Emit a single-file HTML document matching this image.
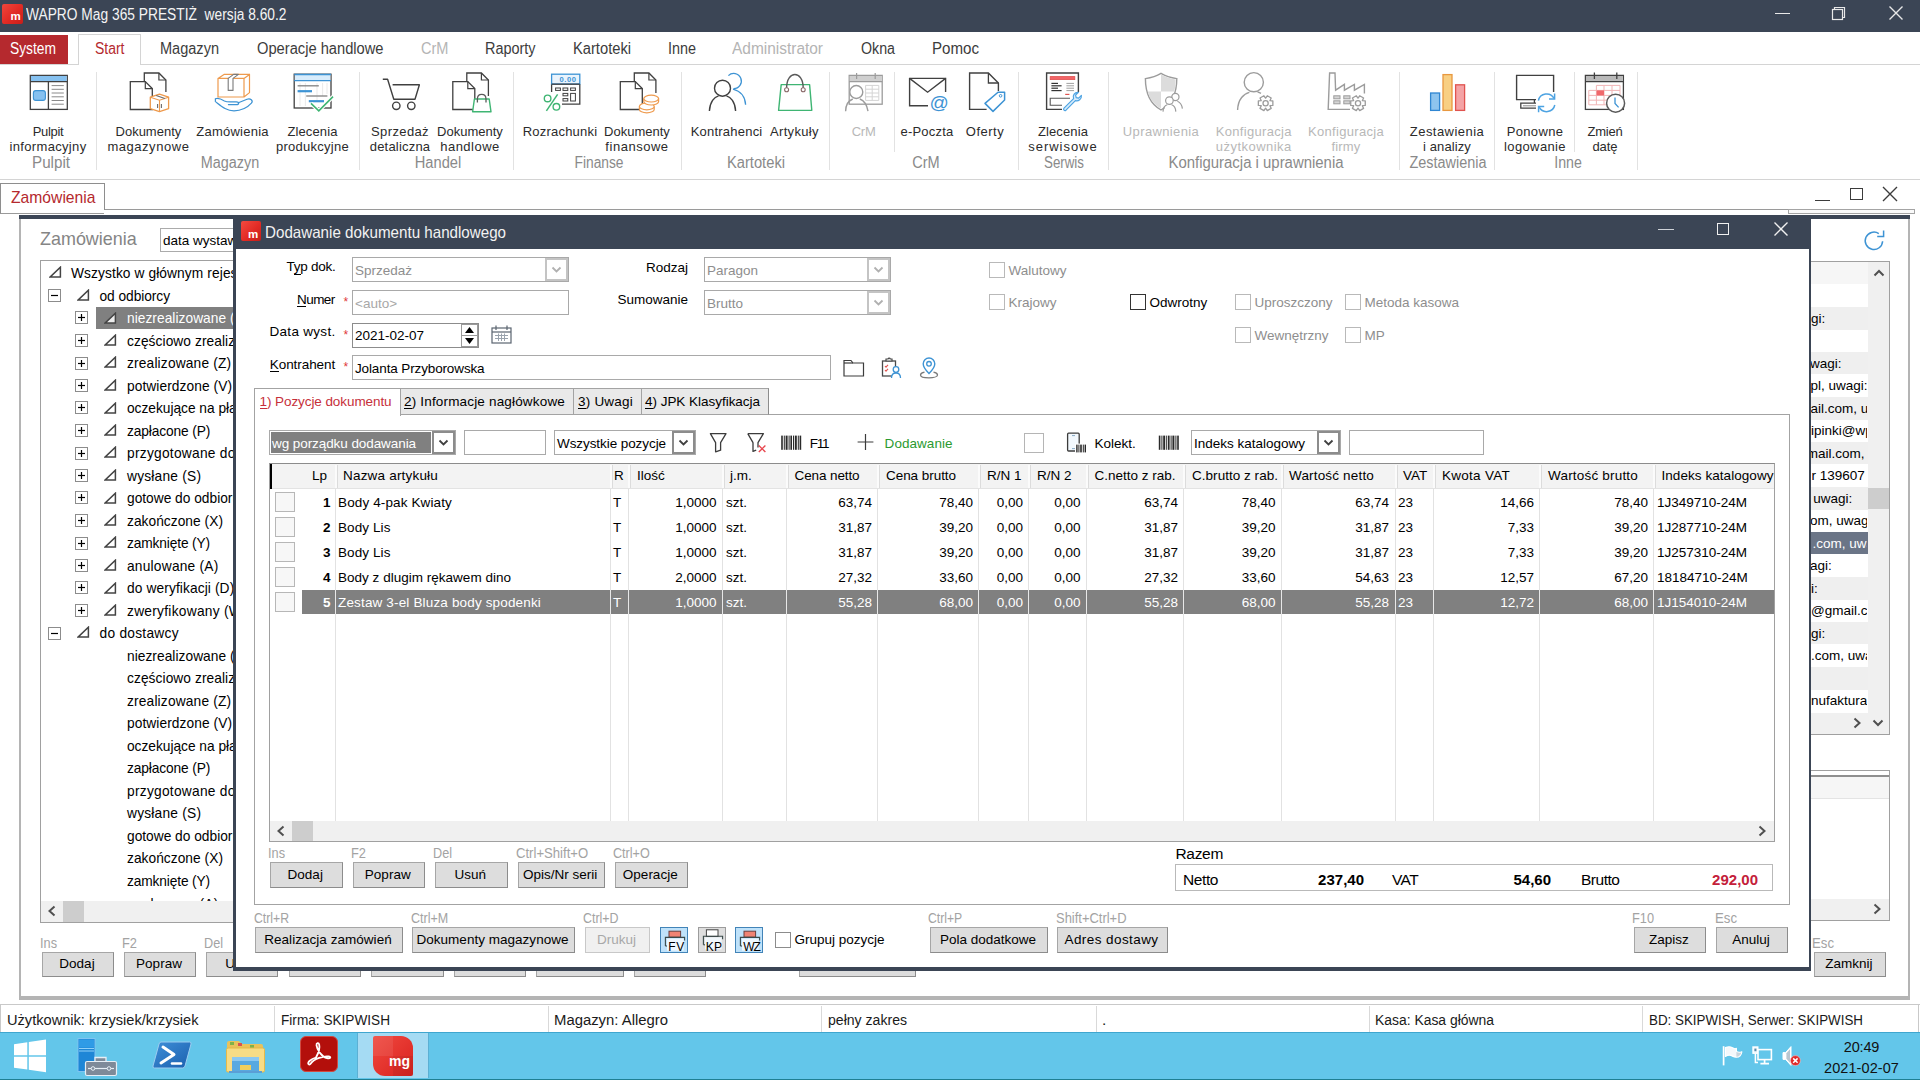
<!DOCTYPE html>
<html><head><meta charset="utf-8"><title>WAPRO Mag</title><style>html,body{margin:0;padding:0;}body{width:1920px;height:1080px;overflow:hidden;background:#fff;position:relative;font-family:"Liberation Sans",sans-serif;}
.a{position:absolute;box-sizing:border-box;}
.t{white-space:pre;line-height:20px;height:20px;}
.btn{background:#dddddd;border:1px solid #a6a6a6;border-bottom-color:#8c8c8c;border-right-color:#8c8c8c;}
</style></head><body>
<div class="a" style="left:0px;top:0px;width:1920px;height:32px;background:#3b4555;"></div>
<div class="a" style="left:2px;top:4px;width:21px;height:20px;border-radius:2px;background:linear-gradient(135deg,#f0463c 0%,#e02a24 55%,#c81e1a 100%);"></div>
<div class="a t" style="top:6px;font-size:11.5px;color:#fff;font-weight:bold;left:10.5px;">m</div>
<div class="a t" style="top:5px;font-size:16px;color:#f4f4f4;transform:scaleX(0.8608);transform-origin:0 50%;left:25.6px;">WAPRO Mag 365 PRESTIŻ  wersja 8.60.2</div>
<div class="a" style="left:1775px;top:13px;width:15px;height:1px;background:#e8e8e8;"></div>
<svg class="a" style="left:1831px;top:6px;" width="15" height="15" viewBox="0 0 15 15" fill="none"><path d="M3.5 3.5V1.5H13.5V11.5H11.5" stroke="#e8e8e8" stroke-width="1.2"/><rect x="1.5" y="3.5" width="10" height="10" stroke="#e8e8e8" stroke-width="1.2"/></svg>
<svg class="a" style="left:1888px;top:5px;" width="16" height="16" viewBox="0 0 16 16" fill="none"><path d="M1.5 1.5L14.5 14.5M14.5 1.5L1.5 14.5" stroke="#e8e8e8" stroke-width="1.4"/></svg>
<div class="a" style="left:0px;top:64px;width:78px;height:1px;background:#d4d4d4;"></div>
<div class="a" style="left:141px;top:64px;width:1779px;height:1px;background:#d4d4d4;"></div>
<div class="a" style="left:0px;top:35px;width:68px;height:29px;background:#b5292e;"></div>
<div class="a t" style="top:39px;font-size:16px;color:#fff;transform:scaleX(0.8624);transform-origin:0 50%;left:9.5px;">System</div>
<div class="a" style="left:78px;top:34px;width:63px;height:31px;background:#fff;border:1px solid #d4d4d4;border-bottom:none;"></div>
<div class="a t" style="top:39px;font-size:16px;color:#b5292e;transform:scaleX(0.8731);transform-origin:0 50%;left:94.5px;">Start</div>
<div class="a t" style="top:39px;font-size:16px;color:#3c3c3c;transform:scaleX(0.9088);transform-origin:0 50%;left:160px;">Magazyn</div>
<div class="a t" style="top:39px;font-size:16px;color:#3c3c3c;transform:scaleX(0.9176);transform-origin:0 50%;left:256.5px;">Operacje handlowe</div>
<div class="a t" style="top:39px;font-size:16px;color:#b4b4b4;transform:scaleX(0.9103);transform-origin:0 50%;left:420.5px;">CrM</div>
<div class="a t" style="top:39px;font-size:16px;color:#3c3c3c;transform:scaleX(0.9032);transform-origin:0 50%;left:485.4px;">Raporty</div>
<div class="a t" style="top:39px;font-size:16px;color:#3c3c3c;transform:scaleX(0.9186);transform-origin:0 50%;left:573px;">Kartoteki</div>
<div class="a t" style="top:39px;font-size:16px;color:#3c3c3c;transform:scaleX(0.8992);transform-origin:0 50%;left:667.7px;">Inne</div>
<div class="a t" style="top:39px;font-size:16px;color:#b4b4b4;transform:scaleX(0.9656);transform-origin:0 50%;left:732.4px;">Administrator</div>
<div class="a t" style="top:39px;font-size:16px;color:#3c3c3c;transform:scaleX(0.8891);transform-origin:0 50%;left:860.5px;">Okna</div>
<div class="a t" style="top:39px;font-size:16px;color:#3c3c3c;transform:scaleX(0.9439);transform-origin:0 50%;left:931.5px;">Pomoc</div>
<div class="a" style="left:0px;top:179px;width:1920px;height:1px;background:#d4d4d4;"></div>
<div class="a" style="left:96px;top:72px;width:1px;height:98px;background:#e2e2e2;"></div>
<div class="a" style="left:359px;top:72px;width:1px;height:98px;background:#e2e2e2;"></div>
<div class="a" style="left:513px;top:72px;width:1px;height:98px;background:#e2e2e2;"></div>
<div class="a" style="left:681px;top:72px;width:1px;height:98px;background:#e2e2e2;"></div>
<div class="a" style="left:829px;top:72px;width:1px;height:98px;background:#e2e2e2;"></div>
<div class="a" style="left:1018px;top:72px;width:1px;height:98px;background:#e2e2e2;"></div>
<div class="a" style="left:1108px;top:72px;width:1px;height:98px;background:#e2e2e2;"></div>
<div class="a" style="left:1399px;top:72px;width:1px;height:98px;background:#e2e2e2;"></div>
<div class="a" style="left:1494px;top:72px;width:1px;height:98px;background:#e2e2e2;"></div>
<div class="a" style="left:1637px;top:72px;width:1px;height:98px;background:#e2e2e2;"></div>
<div class="a" style="left:894px;top:72px;width:1px;height:80px;background:#e2e2e2;"></div>
<div class="a" style="left:1574px;top:72px;width:1px;height:80px;background:#e2e2e2;"></div>
<div class="a t" style="top:122px;font-size:13px;color:#2b2b2b;letter-spacing:-0.336px;left:-152px;width:400px;text-align:center;">Pulpit</div>
<div class="a t" style="top:137px;font-size:13px;color:#2b2b2b;letter-spacing:0.336px;left:-152px;width:400px;text-align:center;">informacyjny</div>
<div class="a t" style="top:122px;font-size:13px;color:#2b2b2b;letter-spacing:0.001px;left:-51.599999999999994px;width:400px;text-align:center;">Dokumenty</div>
<div class="a t" style="top:137px;font-size:13px;color:#2b2b2b;letter-spacing:0.541px;left:-51.599999999999994px;width:400px;text-align:center;">magazynowe</div>
<div class="a t" style="top:122px;font-size:13px;color:#2b2b2b;letter-spacing:0.242px;left:32.5px;width:400px;text-align:center;">Zamówienia</div>
<div class="a t" style="top:122px;font-size:13px;color:#2b2b2b;letter-spacing:0.133px;left:112.5px;width:400px;text-align:center;">Zlecenia</div>
<div class="a t" style="top:137px;font-size:13px;color:#2b2b2b;letter-spacing:0.264px;left:112.5px;width:400px;text-align:center;">produkcyjne</div>
<div class="a t" style="top:122px;font-size:13px;color:#2b2b2b;letter-spacing:0.385px;left:200px;width:400px;text-align:center;">Sprzedaż</div>
<div class="a t" style="top:137px;font-size:13px;color:#2b2b2b;letter-spacing:0.197px;left:200px;width:400px;text-align:center;">detaliczna</div>
<div class="a t" style="top:122px;font-size:13px;color:#2b2b2b;letter-spacing:0.001px;left:270px;width:400px;text-align:center;">Dokumenty</div>
<div class="a t" style="top:137px;font-size:13px;color:#2b2b2b;letter-spacing:0.481px;left:270px;width:400px;text-align:center;">handlowe</div>
<div class="a t" style="top:122px;font-size:13px;color:#2b2b2b;letter-spacing:0.204px;left:360px;width:400px;text-align:center;">Rozrachunki</div>
<div class="a t" style="top:122px;font-size:13px;color:#2b2b2b;letter-spacing:0.001px;left:437px;width:400px;text-align:center;">Dokumenty</div>
<div class="a t" style="top:137px;font-size:13px;color:#2b2b2b;letter-spacing:0.524px;left:437px;width:400px;text-align:center;">finansowe</div>
<div class="a t" style="top:122px;font-size:13px;color:#2b2b2b;letter-spacing:0.216px;left:526.6px;width:400px;text-align:center;">Kontrahenci</div>
<div class="a t" style="top:122px;font-size:13px;color:#2b2b2b;letter-spacing:0.315px;left:594.4px;width:400px;text-align:center;">Artykuły</div>
<div class="a t" style="top:122px;font-size:13px;color:#b8b8b8;letter-spacing:-0.265px;left:663.6px;width:400px;text-align:center;">CrM</div>
<div class="a t" style="top:122px;font-size:13px;color:#2b2b2b;letter-spacing:0.213px;left:727px;width:400px;text-align:center;">e-Poczta</div>
<div class="a t" style="top:122px;font-size:13px;color:#2b2b2b;letter-spacing:0.476px;left:785px;width:400px;text-align:center;">Oferty</div>
<div class="a t" style="top:122px;font-size:13px;color:#2b2b2b;letter-spacing:0.133px;left:863px;width:400px;text-align:center;">Zlecenia</div>
<div class="a t" style="top:137px;font-size:13px;color:#2b2b2b;letter-spacing:0.952px;left:863px;width:400px;text-align:center;">serwisowe</div>
<div class="a t" style="top:122px;font-size:13px;color:#b8b8b8;letter-spacing:0.363px;left:961px;width:400px;text-align:center;">Uprawnienia</div>
<div class="a t" style="top:122px;font-size:13px;color:#b8b8b8;letter-spacing:0.303px;left:1053.75px;width:400px;text-align:center;">Konfiguracja</div>
<div class="a t" style="top:137px;font-size:13px;color:#b8b8b8;letter-spacing:0.450px;left:1053.75px;width:400px;text-align:center;">użytkownika</div>
<div class="a t" style="top:122px;font-size:13px;color:#b8b8b8;letter-spacing:0.303px;left:1146px;width:400px;text-align:center;">Konfiguracja</div>
<div class="a t" style="top:137px;font-size:13px;color:#b8b8b8;letter-spacing:0.119px;left:1146px;width:400px;text-align:center;">firmy</div>
<div class="a t" style="top:122px;font-size:13px;color:#2b2b2b;letter-spacing:0.453px;left:1247px;width:400px;text-align:center;">Zestawienia</div>
<div class="a t" style="top:137px;font-size:13px;color:#2b2b2b;letter-spacing:0.093px;left:1247px;width:400px;text-align:center;">i analizy</div>
<div class="a t" style="top:122px;font-size:13px;color:#2b2b2b;letter-spacing:0.356px;left:1335px;width:400px;text-align:center;">Ponowne</div>
<div class="a t" style="top:137px;font-size:13px;color:#2b2b2b;letter-spacing:0.373px;left:1335px;width:400px;text-align:center;">logowanie</div>
<div class="a t" style="top:122px;font-size:13px;color:#2b2b2b;letter-spacing:-0.183px;left:1405px;width:400px;text-align:center;">Zmień</div>
<div class="a t" style="top:137px;font-size:13px;color:#2b2b2b;letter-spacing:-0.050px;left:1405px;width:400px;text-align:center;">datę</div>
<div class="a t" style="top:153px;font-size:16px;color:#8a8a8a;transform:scaleX(0.9495);transform-origin:50% 50%;left:-149px;width:400px;text-align:center;">Pulpit</div>
<div class="a t" style="top:153px;font-size:16px;color:#8a8a8a;transform:scaleX(0.9011);transform-origin:50% 50%;left:30px;width:400px;text-align:center;">Magazyn</div>
<div class="a t" style="top:153px;font-size:16px;color:#8a8a8a;transform:scaleX(0.9172);transform-origin:50% 50%;left:237.5px;width:400px;text-align:center;">Handel</div>
<div class="a t" style="top:153px;font-size:16px;color:#8a8a8a;transform:scaleX(0.8609);transform-origin:50% 50%;left:398.6px;width:400px;text-align:center;">Finanse</div>
<div class="a t" style="top:153px;font-size:16px;color:#8a8a8a;transform:scaleX(0.9186);transform-origin:50% 50%;left:555.6px;width:400px;text-align:center;">Kartoteki</div>
<div class="a t" style="top:153px;font-size:16px;color:#8a8a8a;transform:scaleX(0.9103);transform-origin:50% 50%;left:725.6px;width:400px;text-align:center;">CrM</div>
<div class="a t" style="top:153px;font-size:16px;color:#8a8a8a;transform:scaleX(0.8332);transform-origin:50% 50%;left:864px;width:400px;text-align:center;">Serwis</div>
<div class="a t" style="top:153px;font-size:16px;color:#8a8a8a;transform:scaleX(0.9325);transform-origin:50% 50%;left:1055.5px;width:400px;text-align:center;">Konfiguracja i uprawnienia</div>
<div class="a t" style="top:153px;font-size:16px;color:#8a8a8a;transform:scaleX(0.9020);transform-origin:50% 50%;left:1248px;width:400px;text-align:center;">Zestawienia</div>
<div class="a t" style="top:153px;font-size:16px;color:#8a8a8a;transform:scaleX(0.8864);transform-origin:50% 50%;left:1368px;width:400px;text-align:center;">Inne</div>
<svg class="a" style="left:0;top:60px" width="1920" height="60" viewBox="0 60 1920 60" fill="none"><rect x="30.3" y="75.4" width="37" height="34" fill="#fff" stroke="#404040" stroke-width="1.3"/><rect x="31" y="76" width="35.6" height="5.4" fill="#86c1f0"/><path d="M30.3 81.6H67.3M48.4 81.6V109.4" stroke="#404040" stroke-width="1.3"/><rect x="33.4" y="90.6" width="12" height="9.8" rx="2.4" fill="#86c1f0" stroke="#3d93d4" stroke-width="1.1"/><path d="M51.6 85.6H63.8" stroke="#8a8a8a" stroke-width="1"/><path d="M51.6 89.3H63.8" stroke="#8a8a8a" stroke-width="1"/><path d="M51.6 93.0H63.8" stroke="#8a8a8a" stroke-width="1"/><path d="M51.6 96.8H63.8" stroke="#8a8a8a" stroke-width="1"/><path d="M51.6 100.5H63.8" stroke="#8a8a8a" stroke-width="1"/><path d="M51.6 104.2H63.8" stroke="#8a8a8a" stroke-width="1"/><path d="M144.3 81.6V73H158.9L165.9 80V92" stroke="#404040" stroke-width="1.3"/><path d="M158.9 73V80H165.9" stroke="#404040" stroke-width="1.2"/><path d="M130.3 81.6H145.3L152.3 88.6V109.5H130.3Z" stroke="#404040" stroke-width="1.3" fill="#fff"/><path d="M145.3 81.6V88.6H152.3" stroke="#404040" stroke-width="1.2"/><path d="M150.3 97.2L159.5 94.2L168.6 97.2V108.6L159.5 111.6L150.3 108.6Z" fill="#fff" stroke="#ee9a4d" stroke-width="1.3" stroke-linejoin="round"/><path d="M150.3 97.2L159.5 100.2L168.6 97.2M159.5 100.2V111.6" stroke="#ee9a4d" stroke-width="1.1"/><path d="M156.2 95.4L164.8 98.4M157.6 104V108M161.4 104V108" stroke="#6a6a6a" stroke-width="1.1"/><path d="M218 78.4L224 74.4H249.5L244 78.4Z M218 78.4H244V97H218Z M244 78.4L249.5 74.4V92.6L244 97" fill="#fff" stroke="#ee9a4d" stroke-width="1.2" stroke-linejoin="round"/><path d="M228.2 78.4L233.6 74.4H238.4L233 78.4V90.4H228.2Z" fill="#fff" stroke="#7a7a7a" stroke-width="1.1" stroke-linejoin="round"/><path d="M215.4 98.8C218.4 97.6 221.4 99.2 224.4 101C227.4 102.6 231 101.8 236.4 101.8C239.4 101.8 239.4 104.6 236.4 104.6H228.4" fill="none" stroke="#3d93d4" stroke-width="1.2" stroke-linejoin="round" stroke-linecap="round"/><path d="M238.4 102.8L247 99.2C250.4 97.8 253.6 100.6 251.4 103.2C248 107 242 110.8 234 110.8C226.4 110.8 221.6 106.4 215.4 101.6" fill="none" stroke="#3d93d4" stroke-width="1.2" stroke-linejoin="round" stroke-linecap="round"/><path d="M215.4 98.8V101.6" stroke="#3d93d4" stroke-width="1.2"/><rect x="294.2" y="74.2" width="36.8" height="33.8" fill="#fff" stroke="#404040" stroke-width="1.3"/><rect x="294.8" y="74.8" width="35.6" height="5.6" fill="#d7ecfc"/><path d="M294.2 74.4H331" stroke="#3d93d4" stroke-width="1.5"/><path d="M294.2 80.6H331" stroke="#3d93d4" stroke-width="1.1"/><path d="M300 83V106M305.4 83V106M317 83V100M322.6 83V96M327 83V94" stroke="#e6e6e6" stroke-width="0.9"/><path d="M297.6 85.8H318.8" stroke="#8a8a8a" stroke-width="1.4"/><path d="M297.6 91.2H312" stroke="#3d93d4" stroke-width="2.2"/><path d="M306.2 96H327.4" stroke="#8a8a8a" stroke-width="1.4"/><path d="M308.8 101.2H324" stroke="#3d93d4" stroke-width="2.2"/><path d="M311 103.4L318.8 110.8L333 96.6" stroke="#fff" stroke-width="4"/><path d="M311 103.4L318.8 110.8L333 96.6" stroke="#3fb573" stroke-width="1.6"/><path d="M382.8 79.2H387.6L393.8 99.2H415L419.4 84.8H392.6" stroke="#404040" stroke-width="1.4" stroke-linejoin="round"/><circle cx="396.3" cy="105.8" r="3.7" stroke="#404040" stroke-width="1.4"/><circle cx="411.3" cy="105.8" r="3.7" stroke="#404040" stroke-width="1.4"/><path d="M466.8 81.6V73H481.40000000000003L488.40000000000003 80V96" stroke="#404040" stroke-width="1.3"/><path d="M481.40000000000003 73V80H488.40000000000003" stroke="#404040" stroke-width="1.2"/><path d="M452.8 81.6H467.8L474.8 88.6V109.5H452.8Z" stroke="#404040" stroke-width="1.3" fill="#fff"/><path d="M467.8 81.6V88.6H474.8" stroke="#404040" stroke-width="1.2"/><path d="M474.4 99H489.2L491 111.8H472.6Z" fill="#fff" stroke="#3fb573" stroke-width="1.4" stroke-linejoin="round"/><path d="M477.4 102.6V99.2C477.4 92.8 486 92.8 486 99.2V102.6" stroke="#5a5a5a" stroke-width="1.3"/><path d="M551.6 84V92M562 104.2H579.8V84" stroke="#404040" stroke-width="1.3"/><rect x="551.6" y="74.2" width="28.2" height="9.8" fill="#eaf4fd" stroke="#3d93d4" stroke-width="1.3"/><path d="M551.6 84.2H579.8" stroke="#404040" stroke-width="1.3"/><text x="559.4" y="82.2" font-family="Liberation Sans" font-size="7.6" font-weight="bold" fill="#3d93d4" letter-spacing="0.6">0.00</text><rect x="555.6" y="88" width="4.8" height="2.4" stroke="#404040" stroke-width="1"/><rect x="563" y="88" width="4.8" height="2.4" stroke="#404040" stroke-width="1"/><rect x="570.6" y="88" width="4.8" height="2.4" stroke="#404040" stroke-width="1"/><rect x="563" y="93.4" width="4.8" height="2.4" stroke="#404040" stroke-width="1"/><rect x="563" y="98.6" width="4.8" height="2.4" stroke="#404040" stroke-width="1"/><rect x="570.6" y="93.4" width="4.8" height="7.6" stroke="#404040" stroke-width="1"/><path d="M557.6 94.4L546.4 110.8" stroke="#3fb573" stroke-width="1.5"/><circle cx="547.6" cy="98.4" r="3.3" stroke="#3fb573" stroke-width="1.4"/><circle cx="556.4" cy="106.8" r="3.3" stroke="#3fb573" stroke-width="1.4"/><path d="M634.3 81.6V73H648.9L655.9 80V93" stroke="#404040" stroke-width="1.3"/><path d="M648.9 73V80H655.9" stroke="#404040" stroke-width="1.2"/><path d="M620.3 81.6H635.3L642.3 88.6V109.5H620.3Z" stroke="#404040" stroke-width="1.3" fill="#fff"/><path d="M635.3 81.6V88.6H642.3" stroke="#404040" stroke-width="1.2"/><path d="M639.4 106.4V109.4A7.4 3.4 0 0 0 654.1999999999999 109.4V106.4" fill="#fff" stroke="#ee9a4d" stroke-width="1.2"/><ellipse cx="646.8" cy="106.4" rx="7.4" ry="3.4" fill="#fff" stroke="#ee9a4d" stroke-width="1.2"/><path d="M643.8000000000001 98.6V101.6A7.4 3.4 0 0 0 658.6 101.6V98.6" fill="#fff" stroke="#ee9a4d" stroke-width="1.2"/><ellipse cx="651.2" cy="98.6" rx="7.4" ry="3.4" fill="#fff" stroke="#ee9a4d" stroke-width="1.2"/><path d="M728.4 75.6A7.6 7.6 0 1 1 733.6 88.6" stroke="#3d93d4" stroke-width="1.3"/><path d="M733 89.2C740.6 91 745.2 97 745.6 104.8" stroke="#3d93d4" stroke-width="1.3"/><circle cx="722.5" cy="88.2" r="8" fill="#fff" stroke="#404040" stroke-width="1.4"/><path d="M709.4 111C709.8 101.8 714.4 97 718.6 95.8M726.4 95.8C730.6 97 735.2 101.8 735.6 111" stroke="#404040" stroke-width="1.4"/><path d="M781.2 84.6H809.6L811.8 110.4H778.6Z" fill="#fff" stroke="#3fb573" stroke-width="1.4" stroke-linejoin="round"/><path d="M786.6 88C786.6 70 803.2 70 803.2 88" stroke="#5a5a5a" stroke-width="1.4"/><circle cx="786.6" cy="89.8" r="2" fill="#fff" stroke="#8a6a6a" stroke-width="1.1"/><circle cx="803.2" cy="89.8" r="2" fill="#fff" stroke="#8a6a6a" stroke-width="1.1"/><rect x="849.2" y="75.4" width="33" height="28.8" fill="#fff" stroke="#9c9c9c" stroke-width="1.3"/><rect x="849.8" y="76" width="31.8" height="5" fill="#cfcfcf"/><path d="M849.2 81.6H882.2M856.6 73V79M875.2 73V79" stroke="#9c9c9c" stroke-width="1.2"/><path d="M865.6 85.4H878.8V100.4H865.6ZM865.6 89.2H878.8M865.6 93H878.8M865.6 96.8H878.8M872.2 85.4V100.4" stroke="#d4d4d4" stroke-width="1"/><circle cx="856.3" cy="92" r="6.5" fill="#fff" stroke="#9c9c9c" stroke-width="1.4"/><path d="M845.6 111.2C845.8 104 849.6 100.2 852.8 99M859.8 99C863 100.2 866.8 104 868 111.2" stroke="#9c9c9c" stroke-width="1.4"/><path d="M945.6 92V78.4H909.6V105.8H928" stroke="#404040" stroke-width="1.4"/><path d="M909.6 78.4L927.6 92.2L945.6 78.4" stroke="#404040" stroke-width="1.4"/><circle cx="939.4" cy="102.8" r="9.4" fill="#fff" stroke="none"/><text x="929.6" y="109.4" font-family="Liberation Sans" font-size="19" fill="#3d93d4">@</text><path d="M998.4 91V83L988.4 73H969.6V109.4H986.6" stroke="#404040" stroke-width="1.4"/><path d="M988.4 73V83H998.4" stroke="#404040" stroke-width="1.3"/><path d="M998 92.2H1004.6V100L993 111.4L985 103.4Z" fill="#fff" stroke="#3d93d4" stroke-width="1.5" stroke-linejoin="round"/><circle cx="1000.6" cy="95.8" r="1.3" stroke="#3d93d4" stroke-width="1"/><path d="M1078.4 92V73H1046.6V109.4H1062" stroke="#404040" stroke-width="1.4"/><rect x="1050.2" y="76.6" width="24.6" height="3" fill="#f36468" stroke="#e0534f" stroke-width="0.8"/><path d="M1051.4 83.4H1058" stroke="#333" stroke-width="1.2"/><path d="M1066.4 83.4H1074" stroke="#a0a0a0" stroke-width="1"/><path d="M1051.4 85.8H1061.6" stroke="#333" stroke-width="1.2"/><path d="M1066.4 85.8H1074" stroke="#a0a0a0" stroke-width="1"/><path d="M1051.4 88.2H1058" stroke="#333" stroke-width="1.2"/><path d="M1066.4 88.2H1074" stroke="#a0a0a0" stroke-width="1"/><path d="M1051.4 90.6H1061.6" stroke="#333" stroke-width="1.2"/><path d="M1066.4 90.6H1074" stroke="#a0a0a0" stroke-width="1"/><path d="M1065.2 94.4H1069.4" stroke="#e0534f" stroke-width="1.2"/><path d="M1070 98.2H1050.2V105.2H1062" stroke="#555" stroke-width="1.1"/><path d="M1064 108.2L1073.6 98.6C1072.4 95.4 1074.6 92 1078.4 92.4L1075.6 95.2L1076.2 97.6L1078.6 98.2L1081.4 95.4C1081.8 99.2 1078.4 101.4 1075.4 100.6L1066 110.2C1064.6 111.4 1062.8 109.6 1064 108.2Z" fill="#d7ecfc" stroke="#4da3e2" stroke-width="1.2" stroke-linejoin="round"/><path d="M1161 73.4C1156 76.6 1150 78 1145.4 78.6C1145.4 94 1150 104 1161 110C1172 104 1176.8 94 1176.8 78.6C1172 78 1166 76.6 1161 73.4Z" fill="#fff" stroke="#9c9c9c" stroke-width="1.4"/><path d="M1161 74.6C1166 77.4 1171 78.8 1175.6 79.4C1175.6 84 1175.2 88 1174.2 91.4H1161Z" fill="#dcdcdc"/><path d="M1161 91.4V108.6C1153.6 104.4 1149.6 98.6 1147.8 91.4Z" fill="#dcdcdc"/><circle cx="1173" cy="103" r="9.5" fill="#fff"/><circle cx="1175.4" cy="97" r="3.6" fill="#fff" stroke="#9c9c9c" stroke-width="1.2"/><path d="M1177.4 101.2C1180.4 102.4 1182 105.4 1182.4 108.6" stroke="#9c9c9c" stroke-width="1.2"/><circle cx="1169.4" cy="100.6" r="3.8" fill="#fff" stroke="#9c9c9c" stroke-width="1.2"/><path d="M1163 111.6C1163.2 107.4 1165.4 105.4 1167.2 104.8M1171.6 104.8C1173.4 105.4 1175.6 107.4 1175.8 111.6" stroke="#9c9c9c" stroke-width="1.2"/><circle cx="1253.8" cy="82.2" r="9.6" stroke="#9c9c9c" stroke-width="1.4"/><path d="M1237.6 110C1238 99 1244 93.6 1249.4 92.4M1257.6 92C1259 92.4 1260 92.8 1261 93.4" stroke="#9c9c9c" stroke-width="1.4"/><path d="M1272.86 100.95L1272.86 105.45L1269.94 105.68L1269.92 105.72L1271.18 108.36L1267.29 110.61L1265.62 108.20L1265.58 108.20L1263.91 110.61L1260.02 108.36L1261.28 105.72L1261.26 105.68L1258.34 105.45L1258.34 100.95L1261.26 100.72L1261.28 100.68L1260.02 98.04L1263.91 95.79L1265.58 98.20L1265.62 98.20L1267.29 95.79L1271.18 98.04L1269.92 100.68L1269.94 100.72Z" stroke="#9c9c9c" stroke-width="1.3" fill="#fff" stroke-linejoin="round"/><circle cx="1265.6" cy="103.2" r="2.6" stroke="#9c9c9c" stroke-width="1.3" fill="#fff"/><path d="M1350 109.4H1328.2L1329.6 73H1335L1335.6 90.2L1344.4 84.4V90.2L1354.4 84.4V90.2L1364.4 84.4V93.4" stroke="#9c9c9c" stroke-width="1.4" stroke-linejoin="miter"/><rect x="1333.8" y="95.8" width="6.2" height="3" fill="#d4d4d4" stroke="#9c9c9c" stroke-width="1"/><rect x="1343.8" y="95.8" width="6.2" height="3" fill="#d4d4d4" stroke="#9c9c9c" stroke-width="1"/><rect x="1333.8" y="100.8" width="6.2" height="3" fill="#d4d4d4" stroke="#9c9c9c" stroke-width="1"/><rect x="1343.8" y="100.8" width="6.2" height="3" fill="#d4d4d4" stroke="#9c9c9c" stroke-width="1"/><path d="M1365.26 100.95L1365.26 105.45L1362.34 105.68L1362.32 105.72L1363.58 108.36L1359.69 110.61L1358.02 108.20L1357.98 108.20L1356.31 110.61L1352.42 108.36L1353.68 105.72L1353.66 105.68L1350.74 105.45L1350.74 100.95L1353.66 100.72L1353.68 100.68L1352.42 98.04L1356.31 95.79L1357.98 98.20L1358.02 98.20L1359.69 95.79L1363.58 98.04L1362.32 100.68L1362.34 100.72Z" stroke="#9c9c9c" stroke-width="1.3" fill="#fff" stroke-linejoin="round"/><circle cx="1358" cy="103.2" r="2.6" stroke="#9c9c9c" stroke-width="1.3" fill="#fff"/><rect x="1430.6" y="93" width="9" height="17.4" fill="#8ec4ee" stroke="#2f86d2" stroke-width="1.3"/><rect x="1443" y="74.6" width="9" height="35.8" fill="#f8cf83" stroke="#e8983f" stroke-width="1.3"/><rect x="1455.6" y="84.8" width="9" height="25.6" fill="#f4a3a5" stroke="#e0534f" stroke-width="1.3"/><path d="M1553.6 92V75.4H1516.6V99.6H1536" stroke="#404040" stroke-width="1.4"/><path d="M1534.4 99.6V103.2M1536 103.2H1520.8V108.2H1536" stroke="#404040" stroke-width="1.3"/><path d="M1523 105.8H1536" stroke="#8a8a8a" stroke-width="1"/><circle cx="1546.6" cy="102.8" r="10.4" fill="#fff"/><path d="M1538.4 100.6A8.4 8.4 0 0 1 1554 98.4" stroke="#4da3e2" stroke-width="1.5"/><path d="M1554.6 93.4V99H1549" stroke="#4da3e2" stroke-width="1.5"/><path d="M1554.8 105A8.4 8.4 0 0 1 1539.2 107.2" stroke="#4da3e2" stroke-width="1.5"/><path d="M1538.6 112.2V106.6H1544.2" stroke="#4da3e2" stroke-width="1.5"/><rect x="1585.4" y="75.4" width="38" height="34" fill="#fff" stroke="#404040" stroke-width="1.3"/><rect x="1586" y="76" width="36.8" height="5" fill="#b9b9b9"/><path d="M1585.4 81.6H1623.4M1594.4 72.4V79M1616.8 72.4V79" stroke="#404040" stroke-width="1.3"/><path d="M1596.4 85.4H1620V104.8H1588.8V90.4H1596.4ZM1588.8 95.4H1620M1588.8 100.2H1620M1596.4 90.4H1620M1596.4 90.4V104.8M1604 85.4V104.8M1612 85.4V104.8" stroke="#f1b5b6" stroke-width="1"/><rect x="1596.6" y="90.4" width="7.4" height="5" fill="#f0686b"/><circle cx="1615.6" cy="103.2" r="9" fill="#fff" stroke="#5a5a5a" stroke-width="1.5"/><path d="M1615 97.4V103.4L1618.6 107.4" stroke="#3d93d4" stroke-width="1.3"/></svg>
<div class="a" style="left:104px;top:209px;width:1811px;height:1px;background:#9a9a9a;"></div>
<div class="a" style="left:1788px;top:209px;width:127px;height:5px;background:#fafafa;border:1px solid #a4a4a4;"></div>
<div class="a" style="left:0px;top:183px;width:105px;height:31px;background:#fff;border:1px solid #8e8e8e;border-bottom:1px solid #9a9a9a;"></div>
<div class="a" style="left:104px;top:210px;width:2px;height:4px;background:#fff;"></div>
<div class="a" style="left:1px;top:213px;width:18px;height:1px;background:#9a9a9a;"></div>
<div class="a t" style="top:188px;font-size:17px;color:#b5292e;transform:scaleX(0.9221);transform-origin:0 50%;left:11.2px;">Zamówienia</div>
<div class="a" style="left:1815px;top:200px;width:15px;height:1px;background:#3c3c3c;"></div>
<div class="a" style="left:1850px;top:188px;width:13px;height:12px;border:1.4px solid #3c3c3c;"></div>
<svg class="a" style="left:1882px;top:186px;" width="16" height="16" viewBox="0 0 16 16" fill="none"><path d="M1 1L15 15M15 1L1 15" stroke="#3c3c3c" stroke-width="1.4"/></svg>
<div class="a" style="left:19px;top:215px;width:1891px;height:785px;background:#fff;"></div>
<div class="a" style="left:19px;top:215px;width:1891px;height:4px;background:#3b4555;"></div>
<div class="a" style="left:19px;top:219px;width:2px;height:781px;background:#b4b4b4;"></div>
<div class="a" style="left:1908px;top:219px;width:2px;height:781px;background:#b4b4b4;"></div>
<div class="a" style="left:19px;top:996px;width:1891px;height:4px;background:#b4b4b4;"></div>
<div class="a t" style="top:229px;font-size:18.5px;color:#858585;transform:scaleX(0.9696);transform-origin:0 50%;left:40px;">Zamówienia</div>
<div class="a" style="left:160px;top:228px;width:140px;height:24px;background:#fff;border:1px solid #ababab;"></div>
<div class="a t" style="top:231px;font-size:13.5px;color:#000;left:163px;">data wystawienia</div>
<div class="a" style="left:40px;top:260px;width:1500px;height:663px;background:#fff;border:1px solid #a0a0a0;"></div>
<div class="a" style="left:96px;top:307px;width:1400px;height:22px;background:#808080;"></div>
<svg class="a" style="left:49px;top:266px;" width="13" height="12" viewBox="0 0 13 12" fill="none"><path d="M1.2 11H11.4V1.2Z" stroke="#444" stroke-width="1.5" stroke-linejoin="miter" fill="none"/></svg>
<div class="a t" style="top:264px;font-size:13.75px;color:#000;letter-spacing:0.097px;left:71px;">Wszystko w głównym rejestrze</div>
<svg class="a" style="left:48px;top:289px;" width="13" height="13" viewBox="0 0 13 13" fill="none"><rect x="0.5" y="0.5" width="12" height="12" fill="#fff" stroke="#8c8c8c"/><path d="M3 6.5H10" stroke="#000" stroke-width="1.2"/></svg>
<svg class="a" style="left:77px;top:289px;" width="13" height="12" viewBox="0 0 13 12" fill="none"><path d="M1.2 11H11.4V1.2Z" stroke="#444" stroke-width="1.5" stroke-linejoin="miter" fill="none"/></svg>
<div class="a t" style="top:287px;font-size:13.75px;color:#000;letter-spacing:-0.053px;left:99.5px;">od odbiorcy</div>
<svg class="a" style="left:75px;top:311px;" width="13" height="13" viewBox="0 0 13 13" fill="none"><rect x="0.5" y="0.5" width="12" height="12" fill="#fff" stroke="#8c8c8c"/><path d="M3 6.5H10" stroke="#000" stroke-width="1.2"/><path d="M6.5 3V10" stroke="#000" stroke-width="1.2"/></svg>
<svg class="a" style="left:104px;top:312px;" width="13" height="12" viewBox="0 0 13 12" fill="none"><path d="M1.2 11H11.4V1.2Z" stroke="#444" stroke-width="1.5" stroke-linejoin="miter" fill="#ececec"/></svg>
<div class="a t" style="top:309px;font-size:13.75px;color:#fff;letter-spacing:0.037px;left:127px;">niezrealizowane (N)</div>
<svg class="a" style="left:75px;top:334px;" width="13" height="13" viewBox="0 0 13 13" fill="none"><rect x="0.5" y="0.5" width="12" height="12" fill="#fff" stroke="#8c8c8c"/><path d="M3 6.5H10" stroke="#000" stroke-width="1.2"/><path d="M6.5 3V10" stroke="#000" stroke-width="1.2"/></svg>
<svg class="a" style="left:104px;top:334px;" width="13" height="12" viewBox="0 0 13 12" fill="none"><path d="M1.2 11H11.4V1.2Z" stroke="#444" stroke-width="1.5" stroke-linejoin="miter" fill="none"/></svg>
<div class="a t" style="top:332px;font-size:13.75px;color:#000;letter-spacing:0.071px;left:127px;">częściowo zrealizowane (C)</div>
<svg class="a" style="left:75px;top:357px;" width="13" height="13" viewBox="0 0 13 13" fill="none"><rect x="0.5" y="0.5" width="12" height="12" fill="#fff" stroke="#8c8c8c"/><path d="M3 6.5H10" stroke="#000" stroke-width="1.2"/><path d="M6.5 3V10" stroke="#000" stroke-width="1.2"/></svg>
<svg class="a" style="left:104px;top:356px;" width="13" height="12" viewBox="0 0 13 12" fill="none"><path d="M1.2 11H11.4V1.2Z" stroke="#444" stroke-width="1.5" stroke-linejoin="miter" fill="none"/></svg>
<div class="a t" style="top:354px;font-size:13.75px;color:#000;letter-spacing:0.164px;left:127px;">zrealizowane (Z)</div>
<svg class="a" style="left:75px;top:379px;" width="13" height="13" viewBox="0 0 13 13" fill="none"><rect x="0.5" y="0.5" width="12" height="12" fill="#fff" stroke="#8c8c8c"/><path d="M3 6.5H10" stroke="#000" stroke-width="1.2"/><path d="M6.5 3V10" stroke="#000" stroke-width="1.2"/></svg>
<svg class="a" style="left:104px;top:379px;" width="13" height="12" viewBox="0 0 13 12" fill="none"><path d="M1.2 11H11.4V1.2Z" stroke="#444" stroke-width="1.5" stroke-linejoin="miter" fill="none"/></svg>
<div class="a t" style="top:377px;font-size:13.75px;color:#000;letter-spacing:0.071px;left:127px;">potwierdzone (V)</div>
<svg class="a" style="left:75px;top:401px;" width="13" height="13" viewBox="0 0 13 13" fill="none"><rect x="0.5" y="0.5" width="12" height="12" fill="#fff" stroke="#8c8c8c"/><path d="M3 6.5H10" stroke="#000" stroke-width="1.2"/><path d="M6.5 3V10" stroke="#000" stroke-width="1.2"/></svg>
<svg class="a" style="left:104px;top:402px;" width="13" height="12" viewBox="0 0 13 12" fill="none"><path d="M1.2 11H11.4V1.2Z" stroke="#444" stroke-width="1.5" stroke-linejoin="miter" fill="none"/></svg>
<div class="a t" style="top:399px;font-size:13.75px;color:#000;letter-spacing:-0.024px;left:127px;">oczekujące na płatność</div>
<svg class="a" style="left:75px;top:424px;" width="13" height="13" viewBox="0 0 13 13" fill="none"><rect x="0.5" y="0.5" width="12" height="12" fill="#fff" stroke="#8c8c8c"/><path d="M3 6.5H10" stroke="#000" stroke-width="1.2"/><path d="M6.5 3V10" stroke="#000" stroke-width="1.2"/></svg>
<svg class="a" style="left:104px;top:424px;" width="13" height="12" viewBox="0 0 13 12" fill="none"><path d="M1.2 11H11.4V1.2Z" stroke="#444" stroke-width="1.5" stroke-linejoin="miter" fill="none"/></svg>
<div class="a t" style="top:422px;font-size:13.75px;color:#000;letter-spacing:-0.118px;left:127px;">zapłacone (P)</div>
<svg class="a" style="left:75px;top:447px;" width="13" height="13" viewBox="0 0 13 13" fill="none"><rect x="0.5" y="0.5" width="12" height="12" fill="#fff" stroke="#8c8c8c"/><path d="M3 6.5H10" stroke="#000" stroke-width="1.2"/><path d="M6.5 3V10" stroke="#000" stroke-width="1.2"/></svg>
<svg class="a" style="left:104px;top:446px;" width="13" height="12" viewBox="0 0 13 12" fill="none"><path d="M1.2 11H11.4V1.2Z" stroke="#444" stroke-width="1.5" stroke-linejoin="miter" fill="none"/></svg>
<div class="a t" style="top:444px;font-size:13.75px;color:#000;letter-spacing:0.264px;left:127px;">przygotowane do wysyłki</div>
<svg class="a" style="left:75px;top:469px;" width="13" height="13" viewBox="0 0 13 13" fill="none"><rect x="0.5" y="0.5" width="12" height="12" fill="#fff" stroke="#8c8c8c"/><path d="M3 6.5H10" stroke="#000" stroke-width="1.2"/><path d="M6.5 3V10" stroke="#000" stroke-width="1.2"/></svg>
<svg class="a" style="left:104px;top:469px;" width="13" height="12" viewBox="0 0 13 12" fill="none"><path d="M1.2 11H11.4V1.2Z" stroke="#444" stroke-width="1.5" stroke-linejoin="miter" fill="none"/></svg>
<div class="a t" style="top:467px;font-size:13.75px;color:#000;letter-spacing:0.221px;left:127px;">wysłane (S)</div>
<svg class="a" style="left:75px;top:491px;" width="13" height="13" viewBox="0 0 13 13" fill="none"><rect x="0.5" y="0.5" width="12" height="12" fill="#fff" stroke="#8c8c8c"/><path d="M3 6.5H10" stroke="#000" stroke-width="1.2"/><path d="M6.5 3V10" stroke="#000" stroke-width="1.2"/></svg>
<svg class="a" style="left:104px;top:492px;" width="13" height="12" viewBox="0 0 13 12" fill="none"><path d="M1.2 11H11.4V1.2Z" stroke="#444" stroke-width="1.5" stroke-linejoin="miter" fill="none"/></svg>
<div class="a t" style="top:489px;font-size:13.75px;color:#000;letter-spacing:-0.005px;left:127px;">gotowe do odbioru</div>
<svg class="a" style="left:75px;top:514px;" width="13" height="13" viewBox="0 0 13 13" fill="none"><rect x="0.5" y="0.5" width="12" height="12" fill="#fff" stroke="#8c8c8c"/><path d="M3 6.5H10" stroke="#000" stroke-width="1.2"/><path d="M6.5 3V10" stroke="#000" stroke-width="1.2"/></svg>
<svg class="a" style="left:104px;top:514px;" width="13" height="12" viewBox="0 0 13 12" fill="none"><path d="M1.2 11H11.4V1.2Z" stroke="#444" stroke-width="1.5" stroke-linejoin="miter" fill="none"/></svg>
<div class="a t" style="top:512px;font-size:13.75px;color:#000;letter-spacing:0.034px;left:127px;">zakończone (X)</div>
<svg class="a" style="left:75px;top:537px;" width="13" height="13" viewBox="0 0 13 13" fill="none"><rect x="0.5" y="0.5" width="12" height="12" fill="#fff" stroke="#8c8c8c"/><path d="M3 6.5H10" stroke="#000" stroke-width="1.2"/><path d="M6.5 3V10" stroke="#000" stroke-width="1.2"/></svg>
<svg class="a" style="left:104px;top:536px;" width="13" height="12" viewBox="0 0 13 12" fill="none"><path d="M1.2 11H11.4V1.2Z" stroke="#444" stroke-width="1.5" stroke-linejoin="miter" fill="none"/></svg>
<div class="a t" style="top:534px;font-size:13.75px;color:#000;letter-spacing:-0.139px;left:127px;">zamknięte (Y)</div>
<svg class="a" style="left:75px;top:559px;" width="13" height="13" viewBox="0 0 13 13" fill="none"><rect x="0.5" y="0.5" width="12" height="12" fill="#fff" stroke="#8c8c8c"/><path d="M3 6.5H10" stroke="#000" stroke-width="1.2"/><path d="M6.5 3V10" stroke="#000" stroke-width="1.2"/></svg>
<svg class="a" style="left:104px;top:559px;" width="13" height="12" viewBox="0 0 13 12" fill="none"><path d="M1.2 11H11.4V1.2Z" stroke="#444" stroke-width="1.5" stroke-linejoin="miter" fill="none"/></svg>
<div class="a t" style="top:557px;font-size:13.75px;color:#000;letter-spacing:0.219px;left:127px;">anulowane (A)</div>
<svg class="a" style="left:75px;top:581px;" width="13" height="13" viewBox="0 0 13 13" fill="none"><rect x="0.5" y="0.5" width="12" height="12" fill="#fff" stroke="#8c8c8c"/><path d="M3 6.5H10" stroke="#000" stroke-width="1.2"/><path d="M6.5 3V10" stroke="#000" stroke-width="1.2"/></svg>
<svg class="a" style="left:104px;top:582px;" width="13" height="12" viewBox="0 0 13 12" fill="none"><path d="M1.2 11H11.4V1.2Z" stroke="#444" stroke-width="1.5" stroke-linejoin="miter" fill="none"/></svg>
<div class="a t" style="top:579px;font-size:13.75px;color:#000;letter-spacing:0.106px;left:127px;">do weryfikacji (D)</div>
<svg class="a" style="left:75px;top:604px;" width="13" height="13" viewBox="0 0 13 13" fill="none"><rect x="0.5" y="0.5" width="12" height="12" fill="#fff" stroke="#8c8c8c"/><path d="M3 6.5H10" stroke="#000" stroke-width="1.2"/><path d="M6.5 3V10" stroke="#000" stroke-width="1.2"/></svg>
<svg class="a" style="left:104px;top:604px;" width="13" height="12" viewBox="0 0 13 12" fill="none"><path d="M1.2 11H11.4V1.2Z" stroke="#444" stroke-width="1.5" stroke-linejoin="miter" fill="none"/></svg>
<div class="a t" style="top:602px;font-size:13.75px;color:#000;letter-spacing:0.271px;left:127px;">zweryfikowany (W)</div>
<svg class="a" style="left:48px;top:627px;" width="13" height="13" viewBox="0 0 13 13" fill="none"><rect x="0.5" y="0.5" width="12" height="12" fill="#fff" stroke="#8c8c8c"/><path d="M3 6.5H10" stroke="#000" stroke-width="1.2"/></svg>
<svg class="a" style="left:77px;top:626px;" width="13" height="12" viewBox="0 0 13 12" fill="none"><path d="M1.2 11H11.4V1.2Z" stroke="#444" stroke-width="1.5" stroke-linejoin="miter" fill="none"/></svg>
<div class="a t" style="top:624px;font-size:13.75px;color:#000;letter-spacing:0.257px;left:99.5px;">do dostawcy</div>
<div class="a t" style="top:647px;font-size:13.75px;color:#000;letter-spacing:0.037px;left:127px;">niezrealizowane (N)</div>
<div class="a t" style="top:669px;font-size:13.75px;color:#000;letter-spacing:0.071px;left:127px;">częściowo zrealizowane (C)</div>
<div class="a t" style="top:692px;font-size:13.75px;color:#000;letter-spacing:0.164px;left:127px;">zrealizowane (Z)</div>
<div class="a t" style="top:714px;font-size:13.75px;color:#000;letter-spacing:0.071px;left:127px;">potwierdzone (V)</div>
<div class="a t" style="top:737px;font-size:13.75px;color:#000;letter-spacing:-0.024px;left:127px;">oczekujące na płatność</div>
<div class="a t" style="top:759px;font-size:13.75px;color:#000;letter-spacing:-0.118px;left:127px;">zapłacone (P)</div>
<div class="a t" style="top:782px;font-size:13.75px;color:#000;letter-spacing:0.264px;left:127px;">przygotowane do wysyłki</div>
<div class="a t" style="top:804px;font-size:13.75px;color:#000;letter-spacing:0.221px;left:127px;">wysłane (S)</div>
<div class="a t" style="top:827px;font-size:13.75px;color:#000;letter-spacing:-0.005px;left:127px;">gotowe do odbioru</div>
<div class="a t" style="top:849px;font-size:13.75px;color:#000;letter-spacing:0.034px;left:127px;">zakończone (X)</div>
<div class="a t" style="top:872px;font-size:13.75px;color:#000;letter-spacing:-0.139px;left:127px;">zamknięte (Y)</div>
<div class="a t" style="top:895px;font-size:13.75px;color:#000;letter-spacing:0.219px;left:127px;">anulowane (A)</div>
<div class="a" style="left:41px;top:901px;width:1498px;height:21px;background:#f0f0f0;"></div>
<div class="a" style="left:63px;top:901px;width:21px;height:21px;background:#cdcdcd;"></div>
<svg class="a" style="left:47px;top:905px;" width="10" height="12" viewBox="0 0 10 12" fill="none"><path d="M7.5 1.5L2.5 6L7.5 10.5" stroke="#505050" stroke-width="2"/></svg>
<div class="a btn" style="left:42px;top:952px;width:72px;height:25px;"></div>
<div class="a t" style="top:954px;font-size:13.5px;color:#000;left:-123.0px;width:400px;text-align:center;">Dodaj</div>
<div class="a btn" style="left:124px;top:952px;width:72px;height:25px;"></div>
<div class="a t" style="top:954px;font-size:13.5px;color:#000;left:-41.0px;width:400px;text-align:center;">Popraw</div>
<div class="a btn" style="left:206px;top:952px;width:72px;height:25px;"></div>
<div class="a t" style="top:954px;font-size:13.5px;color:#000;left:41.0px;width:400px;text-align:center;">Usuń</div>
<div class="a btn" style="left:289px;top:952px;width:72px;height:25px;"></div>
<div class="a btn" style="left:371px;top:952px;width:73px;height:25px;"></div>
<div class="a btn" style="left:454px;top:952px;width:72px;height:25px;"></div>
<div class="a btn" style="left:536px;top:952px;width:88px;height:25px;"></div>
<div class="a btn" style="left:634px;top:952px;width:72px;height:25px;"></div>
<div class="a btn" style="left:799px;top:952px;width:117px;height:25px;"></div>
<div class="a btn" style="left:1814px;top:952px;width:72px;height:25px;"></div>
<div class="a t" style="top:954px;font-size:13.5px;color:#000;left:1649.0px;width:400px;text-align:center;">Zamknij</div>
<div class="a t" style="top:933px;font-size:14.5px;color:#a3a3a3;transform:scaleX(0.8789);transform-origin:0 50%;left:40px;">Ins</div>
<div class="a t" style="top:933px;font-size:14.5px;color:#a3a3a3;transform:scaleX(0.8865);transform-origin:0 50%;left:122px;">F2</div>
<div class="a t" style="top:933px;font-size:14.5px;color:#a3a3a3;transform:scaleX(0.8733);transform-origin:0 50%;left:204px;">Del</div>
<div class="a t" style="top:933px;font-size:14.5px;color:#a3a3a3;transform:scaleX(0.9101);transform-origin:0 50%;left:1812px;">Esc</div>
<svg class="a" style="left:1862px;top:229px;" width="24" height="23" viewBox="0 0 24 23" fill="none"><path d="M20.6 12.2A8.7 8.7 0 1 1 16.8 4.6" stroke="#3d93d4" stroke-width="1.5"/><path d="M15.2 4.6H21.6V-1.6" transform="translate(0,3)" stroke="#3d93d4" stroke-width="1.5"/></svg>
<div class="a" style="left:1600px;top:261px;width:290px;height:474px;background:#fff;border:1px solid #a0a0a0;"></div>
<div class="a" style="left:1601px;top:262px;width:267px;height:22px;background:#f6f6f6;"></div>
<div class="a" style="left:1601px;top:284px;width:267px;height:23px;background:#fff;"></div>
<div class="a" style="left:1601px;top:307px;width:267px;height:23px;background:#efefef;"></div>
<div class="a t" style="top:309px;font-size:13.5px;color:#000;left:1811px;width:56px;overflow:hidden;">gi:</div>
<div class="a" style="left:1601px;top:330px;width:267px;height:22px;background:#fff;"></div>
<div class="a" style="left:1601px;top:352px;width:267px;height:22px;background:#efefef;"></div>
<div class="a t" style="top:354px;font-size:13.5px;color:#000;left:1810px;width:57px;overflow:hidden;">wagi:</div>
<div class="a" style="left:1601px;top:374px;width:267px;height:23px;background:#fff;"></div>
<div class="a t" style="top:376px;font-size:13.5px;color:#000;left:1810.5px;width:56px;overflow:hidden;">pl, uwagi:</div>
<div class="a" style="left:1601px;top:397px;width:267px;height:23px;background:#efefef;"></div>
<div class="a t" style="top:399px;font-size:13.5px;color:#000;left:1810.5px;width:56px;overflow:hidden;">ail.com, uw</div>
<div class="a" style="left:1601px;top:420px;width:267px;height:22px;background:#fff;"></div>
<div class="a t" style="top:421px;font-size:13.5px;color:#000;left:1811px;width:56px;overflow:hidden;">ipinki@wp.pl</div>
<div class="a" style="left:1601px;top:442px;width:267px;height:22px;background:#efefef;"></div>
<div class="a t" style="top:444px;font-size:13.5px;color:#000;left:1806.8px;width:60px;overflow:hidden;">mail.com, uw</div>
<div class="a" style="left:1601px;top:464px;width:267px;height:23px;background:#fff;"></div>
<div class="a t" style="top:466px;font-size:13.5px;color:#000;left:1811.5px;width:55px;overflow:hidden;">r 139607</div>
<div class="a" style="left:1601px;top:487px;width:267px;height:23px;background:#efefef;"></div>
<div class="a t" style="top:489px;font-size:13.5px;color:#000;left:1813.3px;width:53px;overflow:hidden;">uwagi:</div>
<div class="a" style="left:1601px;top:510px;width:267px;height:22px;background:#fff;"></div>
<div class="a t" style="top:511px;font-size:13.5px;color:#000;left:1810px;width:57px;overflow:hidden;">om, uwagi</div>
<div class="a" style="left:1601px;top:532px;width:267px;height:22px;background:#6b7587;"></div>
<div class="a t" style="top:534px;font-size:13.5px;color:#fff;left:1812.5px;width:54px;overflow:hidden;">.com, uwagi</div>
<div class="a" style="left:1601px;top:554px;width:267px;height:23px;background:#fff;"></div>
<div class="a t" style="top:556px;font-size:13.5px;color:#000;left:1810px;width:57px;overflow:hidden;">agi:</div>
<div class="a" style="left:1601px;top:577px;width:267px;height:23px;background:#efefef;"></div>
<div class="a t" style="top:579px;font-size:13.5px;color:#000;left:1811px;width:56px;overflow:hidden;">i:</div>
<div class="a" style="left:1601px;top:600px;width:267px;height:22px;background:#fff;"></div>
<div class="a t" style="top:601px;font-size:13.5px;color:#000;left:1811px;width:56px;overflow:hidden;">@gmail.com</div>
<div class="a" style="left:1601px;top:622px;width:267px;height:22px;background:#efefef;"></div>
<div class="a t" style="top:624px;font-size:13.5px;color:#000;left:1811px;width:56px;overflow:hidden;">gi:</div>
<div class="a" style="left:1601px;top:644px;width:267px;height:23px;background:#fff;"></div>
<div class="a t" style="top:646px;font-size:13.5px;color:#000;left:1811px;width:56px;overflow:hidden;">.com, uwagi</div>
<div class="a" style="left:1601px;top:667px;width:267px;height:23px;background:#efefef;"></div>
<div class="a" style="left:1601px;top:690px;width:267px;height:22px;background:#fff;"></div>
<div class="a t" style="top:691px;font-size:13.5px;color:#000;left:1811px;width:56px;overflow:hidden;">nufaktura@</div>
<div class="a" style="left:1868px;top:262px;width:21px;height:472px;background:#f0f0f0;"></div>
<div class="a" style="left:1868px;top:488px;width:21px;height:21px;background:#cdcdcd;"></div>
<svg class="a" style="left:1873px;top:268px;" width="12" height="10" viewBox="0 0 12 10" fill="none"><path d="M1.5 7.5L6 3L10.5 7.5" stroke="#505050" stroke-width="2"/></svg>
<div class="a" style="left:1601px;top:713px;width:267px;height:21px;background:#f0f0f0;"></div>
<svg class="a" style="left:1852px;top:717px;" width="10" height="12" viewBox="0 0 10 12" fill="none"><path d="M2.5 1.5L7.5 6L2.5 10.5" stroke="#505050" stroke-width="2"/></svg>
<svg class="a" style="left:1872px;top:718px;" width="12" height="10" viewBox="0 0 12 10" fill="none"><path d="M1.5 2.5L6 7L10.5 2.5" stroke="#505050" stroke-width="2"/></svg>
<div class="a" style="left:1600px;top:770px;width:290px;height:151px;background:#fff;border:1px solid #a0a0a0;"></div>
<div class="a" style="left:1601px;top:775px;width:288px;height:2px;background:#8f8f8f;"></div>
<div class="a" style="left:1601px;top:777px;width:288px;height:21px;background:#f6f6f6;"></div>
<div class="a" style="left:1601px;top:798px;width:288px;height:1px;background:#e4e4e4;"></div>
<div class="a" style="left:1601px;top:899px;width:288px;height:21px;background:#f0f0f0;"></div>
<svg class="a" style="left:1872px;top:903px;" width="10" height="12" viewBox="0 0 10 12" fill="none"><path d="M2.5 1.5L7.5 6L2.5 10.5" stroke="#505050" stroke-width="2"/></svg>
<div class="a" style="left:233px;top:215px;width:1578px;height:756px;background:#fff;border:3px solid #3b4555;border-top:none;border-right-width:2px;border-bottom-width:4px;"></div>
<div class="a" style="left:233px;top:215px;width:1578px;height:34px;background:#3b4555;"></div>
<div class="a" style="left:241px;top:221px;width:20px;height:20px;border-radius:2px;background:linear-gradient(135deg,#f34a3f 0%,#e22b25 55%,#c41d19 100%);"></div>
<div class="a t" style="top:224px;font-size:11.5px;color:#fff;font-weight:bold;left:248px;">m</div>
<div class="a t" style="top:222px;font-size:16.5px;color:#f2f2f2;transform:scaleX(0.9187);transform-origin:0 50%;left:265px;">Dodawanie dokumentu handlowego</div>
<div class="a" style="left:1658px;top:229px;width:16px;height:1px;background:#cfd3d8;"></div>
<div class="a" style="left:1717px;top:223px;width:12px;height:12px;border:1.4px solid #f0f0f0;"></div>
<svg class="a" style="left:1773px;top:221px;" width="16" height="16" viewBox="0 0 16 16" fill="none"><path d="M1.5 1.5L14.5 14.5M14.5 1.5L1.5 14.5" stroke="#f0f0f0" stroke-width="1.4"/></svg>
<div class="a t" style="top:257px;font-size:13.5px;color:#000;letter-spacing:-0.253px;left:-64.60000000000002px;width:400px;text-align:right;">Typ dok.</div>
<div class="a" style="left:294px;top:274px;width:7px;height:1px;background:#000;"></div>
<div class="a t" style="top:290px;font-size:13.5px;color:#000;letter-spacing:-0.581px;left:-65.30000000000001px;width:400px;text-align:right;">Numer</div>
<div class="a" style="left:297px;top:306px;width:9px;height:1px;background:#000;"></div>
<div class="a t" style="top:322px;font-size:13.5px;color:#000;letter-spacing:0.298px;left:-64.5px;width:400px;text-align:right;">Data wyst.</div>
<div class="a t" style="top:355px;font-size:13.5px;color:#000;letter-spacing:-0.074px;left:-64.89999999999998px;width:400px;text-align:right;">Kontrahent</div>
<div class="a" style="left:270px;top:371px;width:9px;height:1px;background:#000;"></div>
<div class="a t" style="top:292px;font-size:12px;color:#e0383a;left:343.6px;">*</div>
<div class="a t" style="top:325px;font-size:12px;color:#e0383a;left:343.6px;">*</div>
<div class="a t" style="top:357px;font-size:12px;color:#e0383a;left:343.6px;">*</div>
<div class="a t" style="top:258px;font-size:13.5px;color:#000;left:288px;width:400px;text-align:right;">Rodzaj</div>
<div class="a t" style="top:290px;font-size:13.5px;color:#000;left:288px;width:400px;text-align:right;">Sumowanie</div>
<div class="a" style="left:352px;top:257px;width:217px;height:25px;background:#fff;border:1px solid #a9a9a9;"></div>
<div class="a" style="left:545px;top:258px;width:23px;height:23px;background:#fff;border:2px solid #c4c4c4;"></div>
<svg class="a" style="left:551px;top:266px;" width="11" height="8" viewBox="0 0 11 8" fill="none"><path d="M1.5 1.5L5.5 5.5L9.5 1.5" stroke="#b0b0b0" stroke-width="1.8"/></svg>
<div class="a t" style="top:261px;font-size:13.5px;color:#8e8e8e;left:355px;">Sprzedaż</div>
<div class="a" style="left:352px;top:290px;width:217px;height:25px;background:#fff;border:1px solid #a9a9a9;"></div>
<div class="a t" style="top:294px;font-size:13.5px;color:#a8a8a8;left:355px;">&lt;auto&gt;</div>
<div class="a" style="left:352px;top:323px;width:127px;height:25px;background:#fff;border:1px solid #8c8c8c;"></div>
<div class="a t" style="top:326px;font-size:13.5px;color:#000;letter-spacing:-0.005px;left:355px;">2021-02-07</div>
<div class="a" style="left:461px;top:324px;width:17px;height:23px;background:#fff;border:1px solid #9a9a9a;"></div>
<div class="a" style="left:462px;top:335px;width:15px;height:1px;background:#9a9a9a;"></div>
<svg class="a" style="left:464px;top:326px;" width="11" height="8" viewBox="0 0 11 8" fill="none"><path d="M5.5 1L10 7H1Z" fill="#000"/></svg>
<svg class="a" style="left:464px;top:337px;" width="11" height="8" viewBox="0 0 11 8" fill="none"><path d="M5.5 7L10 1H1Z" fill="#000"/></svg>
<svg class="a" style="left:491px;top:324px;" width="21" height="20" viewBox="0 0 21 20" fill="none"><rect x="1" y="4" width="19" height="15" stroke="#5a6470" stroke-width="1.2" fill="#fff"/><path d="M1 8H20" stroke="#5a6470" stroke-width="1.2"/><path d="M5 1.5V6M16 1.5V6" stroke="#5a6470" stroke-width="1.2"/><path d="M4 11.5H17M4 14.5H17M7.5 9.5V17M10.5 9.5V17M13.5 9.5V17" stroke="#9aa3ad" stroke-width="1"/></svg>
<div class="a" style="left:352px;top:355px;width:479px;height:25px;background:#fff;border:1px solid #a9a9a9;"></div>
<div class="a t" style="top:359px;font-size:13.5px;color:#000;letter-spacing:-0.128px;left:355px;">Jolanta Przyborowska</div>
<div class="a" style="left:704px;top:257px;width:187px;height:25px;background:#fff;border:1px solid #a9a9a9;"></div>
<div class="a" style="left:867px;top:258px;width:23px;height:23px;background:#fff;border:2px solid #c4c4c4;"></div>
<svg class="a" style="left:873px;top:266px;" width="11" height="8" viewBox="0 0 11 8" fill="none"><path d="M1.5 1.5L5.5 5.5L9.5 1.5" stroke="#b0b0b0" stroke-width="1.8"/></svg>
<div class="a t" style="top:261px;font-size:13.5px;color:#8e8e8e;left:707px;">Paragon</div>
<div class="a" style="left:704px;top:290px;width:187px;height:25px;background:#fff;border:1px solid #a9a9a9;"></div>
<div class="a" style="left:867px;top:291px;width:23px;height:23px;background:#fff;border:2px solid #c4c4c4;"></div>
<svg class="a" style="left:873px;top:299px;" width="11" height="8" viewBox="0 0 11 8" fill="none"><path d="M1.5 1.5L5.5 5.5L9.5 1.5" stroke="#b0b0b0" stroke-width="1.8"/></svg>
<div class="a t" style="top:294px;font-size:13.5px;color:#8e8e8e;left:707px;">Brutto</div>
<div class="a" style="left:989px;top:262px;width:16px;height:16px;background:#fff;border:1px solid #b9b9b9;"></div>
<div class="a t" style="top:261px;font-size:13.5px;color:#8e8e8e;left:1008.5px;">Walutowy</div>
<div class="a" style="left:989px;top:294px;width:16px;height:16px;background:#fff;border:1px solid #b9b9b9;"></div>
<div class="a t" style="top:293px;font-size:13.5px;color:#8e8e8e;left:1008.5px;">Krajowy</div>
<div class="a" style="left:1130px;top:294px;width:16px;height:16px;background:#fff;border:1px solid #333;"></div>
<div class="a t" style="top:293px;font-size:13.5px;color:#000;left:1149.5px;">Odwrotny</div>
<div class="a" style="left:1235px;top:294px;width:16px;height:16px;background:#fff;border:1px solid #b9b9b9;"></div>
<div class="a t" style="top:293px;font-size:13.5px;color:#8e8e8e;left:1254.5px;">Uproszczony</div>
<div class="a" style="left:1345px;top:294px;width:16px;height:16px;background:#fff;border:1px solid #b9b9b9;"></div>
<div class="a t" style="top:293px;font-size:13.5px;color:#8e8e8e;left:1364.5px;">Metoda kasowa</div>
<div class="a" style="left:1235px;top:327px;width:16px;height:16px;background:#fff;border:1px solid #b9b9b9;"></div>
<div class="a t" style="top:326px;font-size:13.5px;color:#8e8e8e;left:1254.5px;">Wewnętrzny</div>
<div class="a" style="left:1345px;top:327px;width:16px;height:16px;background:#fff;border:1px solid #b9b9b9;"></div>
<div class="a t" style="top:326px;font-size:13.5px;color:#8e8e8e;left:1364.5px;">MP</div>
<svg class="a" style="left:843px;top:358px;" width="22" height="19" viewBox="0 0 22 19" fill="none"><path d="M1 2.5H8L10 5H20.5V18H1Z" stroke="#3c3c3c" stroke-width="1.2" fill="#fff"/><path d="M1 5H10" stroke="#3c3c3c" stroke-width="1.2"/></svg>
<svg class="a" style="left:881px;top:357px;" width="22" height="22" viewBox="0 0 22 22" fill="none"><rect x="1.5" y="4" width="13" height="15" stroke="#4a4a4a" stroke-width="1.3" fill="#fff"/><path d="M5 4V2H7A1.2 1.2 0 0 1 9.3 2H11V4Z" stroke="#4a4a4a" stroke-width="1.2" fill="#fff"/><path d="M4 9L5 10.2L7 7.8M4 13L5 14.2L7 11.8" stroke="#e0534f" stroke-width="1.1"/><circle cx="15" cy="12.5" r="2.8" stroke="#3d93d4" stroke-width="1.3" fill="#fff"/><path d="M10.5 21C10.5 17.6 12.6 16 15 16S19.5 17.6 19.5 21" stroke="#3d93d4" stroke-width="1.3" fill="#fff"/></svg>
<svg class="a" style="left:919px;top:357px;" width="20" height="22" viewBox="0 0 20 22" fill="none"><path d="M10 16.5C10 16.5 4.2 10.8 4.2 6.8A5.8 5.8 0 0 1 15.8 6.8C15.8 10.8 10 16.5 10 16.5Z" stroke="#3d93d4" stroke-width="1.4" fill="#fff"/><circle cx="10" cy="6.8" r="2.3" stroke="#3d93d4" stroke-width="1.3"/><path d="M5.5 15.2C3 15.8 1.5 16.8 1.5 17.9C1.5 19.6 5.3 20.8 10 20.8S18.5 19.6 18.5 17.9C18.5 16.8 17 15.8 14.5 15.2" stroke="#7a7a7a" stroke-width="1.3"/></svg>
<div class="a" style="left:254px;top:414px;width:1536px;height:491px;background:#fff;border:1px solid #a3a3a3;"></div>
<div class="a" style="left:400px;top:388px;width:174px;height:27px;background:#e9e9e9;border:1px solid #a3a3a3;border-right-color:#8c8c8c;"></div>
<div class="a" style="left:573px;top:388px;width:69px;height:27px;background:#e9e9e9;border:1px solid #a3a3a3;border-right-color:#8c8c8c;"></div>
<div class="a" style="left:641px;top:388px;width:128px;height:27px;background:#e9e9e9;border:1px solid #a3a3a3;border-right-color:#8c8c8c;"></div>
<div class="a" style="left:254px;top:388px;width:147px;height:28px;background:#fff;border:1px solid #a3a3a3;border-bottom:none;"></div>
<div class="a t" style="top:392px;font-size:13.5px;color:#c62f3a;letter-spacing:-0.078px;left:259.5px;">1) Pozycje dokumentu</div>
<div class="a" style="left:259.5px;top:408px;width:7px;height:1px;background:#c62f3a;"></div>
<div class="a t" style="top:392px;font-size:13.5px;color:#000;letter-spacing:0.174px;left:404px;">2) Informacje nagłówkowe</div>
<div class="a" style="left:404px;top:408px;width:8px;height:1px;background:#000;"></div>
<div class="a t" style="top:392px;font-size:13.5px;color:#000;letter-spacing:0.217px;left:578px;">3) Uwagi</div>
<div class="a" style="left:578px;top:408px;width:8px;height:1px;background:#000;"></div>
<div class="a t" style="top:392px;font-size:13.5px;color:#000;letter-spacing:-0.028px;left:645px;">4) JPK Klasyfikacja</div>
<div class="a" style="left:645px;top:408px;width:8px;height:1px;background:#000;"></div>
<div class="a" style="left:269px;top:430px;width:187px;height:25px;background:#fff;border:1px solid #a9a9a9;"></div>
<div class="a" style="left:432px;top:431px;width:23px;height:23px;background:#fff;border:2px solid #8c8c8c;"></div>
<svg class="a" style="left:438px;top:439px;" width="11" height="8" viewBox="0 0 11 8" fill="none"><path d="M1.5 1.5L5.5 5.5L9.5 1.5" stroke="#404040" stroke-width="1.8"/></svg>
<div class="a" style="left:271px;top:432px;width:160px;height:21px;background:#808080;"></div>
<div class="a t" style="top:434px;font-size:13.5px;color:#fff;letter-spacing:-0.076px;left:272px;">wg porządku dodawania</div>
<div class="a" style="left:464px;top:430px;width:82px;height:25px;background:#fff;border:1px solid #a9a9a9;"></div>
<div class="a" style="left:554px;top:430px;width:142px;height:25px;background:#fff;border:1px solid #a9a9a9;"></div>
<div class="a" style="left:672px;top:431px;width:23px;height:23px;background:#fff;border:2px solid #8c8c8c;"></div>
<svg class="a" style="left:678px;top:439px;" width="11" height="8" viewBox="0 0 11 8" fill="none"><path d="M1.5 1.5L5.5 5.5L9.5 1.5" stroke="#404040" stroke-width="1.8"/></svg>
<div class="a t" style="top:434px;font-size:13.5px;color:#000;letter-spacing:-0.075px;left:557px;">Wszystkie pozycje</div>
<div class="a t" style="top:434px;font-size:13.5px;color:#000;letter-spacing:-1.286px;left:809.8px;">F11</div>
<div class="a t" style="top:434px;font-size:13.5px;color:#2b9a30;letter-spacing:0.051px;left:884.6px;">Dodawanie</div>
<div class="a" style="left:1024px;top:433px;width:20px;height:20px;background:#fff;border:1px solid #b5b5b5;"></div>
<div class="a t" style="top:434px;font-size:13.5px;color:#000;left:1094.5px;">Kolekt.</div>
<div class="a" style="left:1191px;top:430px;width:150px;height:25px;background:#fff;border:1px solid #a9a9a9;"></div>
<div class="a" style="left:1317px;top:431px;width:23px;height:23px;background:#fff;border:2px solid #8c8c8c;"></div>
<svg class="a" style="left:1323px;top:439px;" width="11" height="8" viewBox="0 0 11 8" fill="none"><path d="M1.5 1.5L5.5 5.5L9.5 1.5" stroke="#404040" stroke-width="1.8"/></svg>
<div class="a t" style="top:434px;font-size:13.5px;color:#000;letter-spacing:-0.003px;left:1194px;">Indeks katalogowy</div>
<div class="a" style="left:1349px;top:430px;width:135px;height:25px;background:#fff;border:1px solid #a9a9a9;"></div>
<svg class="a" style="left:700px;top:425px" width="500" height="35" viewBox="700 425 500 35" fill="none"><path d="M710.4 433.6H726L720.6 442.6V450.2L715.6 451.8V442.6Z" stroke="#3c3c3c" stroke-width="1.3" stroke-linejoin="round"/><path d="M747.8 433.6H763.4L758 442.6V447.4M753 442.6L747.8 433.6M753 442.6V451.4L756.2 450.2" stroke="#3c3c3c" stroke-width="1.3" stroke-linejoin="round"/><path d="M758.8 445.6L765.4 452M765.4 445.6L758.8 452" stroke="#e8474f" stroke-width="1.4"/><rect x="781.2" y="435.6" width="1.6" height="14.2" fill="#2a2a2a"/><rect x="783.8" y="435.6" width="1" height="14.2" fill="#2a2a2a"/><rect x="785.6" y="435.6" width="2" height="14.2" fill="#2a2a2a"/><rect x="788.6" y="435.6" width="1" height="14.2" fill="#2a2a2a"/><rect x="790.4" y="435.6" width="1.6" height="14.2" fill="#2a2a2a"/><rect x="793.0" y="435.6" width="1" height="14.2" fill="#2a2a2a"/><rect x="794.8" y="435.6" width="2" height="14.2" fill="#2a2a2a"/><rect x="797.8" y="435.6" width="1" height="14.2" fill="#2a2a2a"/><rect x="799.6" y="435.6" width="1.6" height="14.2" fill="#2a2a2a"/><rect x="1158.8" y="435.6" width="1.6" height="14.2" fill="#2a2a2a"/><rect x="1161.4" y="435.6" width="1" height="14.2" fill="#2a2a2a"/><rect x="1163.2" y="435.6" width="2" height="14.2" fill="#2a2a2a"/><rect x="1166.2" y="435.6" width="1" height="14.2" fill="#2a2a2a"/><rect x="1168.0" y="435.6" width="1.6" height="14.2" fill="#2a2a2a"/><rect x="1170.6" y="435.6" width="1" height="14.2" fill="#2a2a2a"/><rect x="1172.4" y="435.6" width="2" height="14.2" fill="#2a2a2a"/><rect x="1175.4" y="435.6" width="1" height="14.2" fill="#2a2a2a"/><rect x="1177.2" y="435.6" width="1.6" height="14.2" fill="#2a2a2a"/><path d="M857.6 442H873.4M865.5 434V450" stroke="#3c3c3c" stroke-width="1.2"/><rect x="1067.6" y="433.2" width="11.6" height="17.8" rx="1" fill="#f2f8fd" stroke="#3c3c3c" stroke-width="1.3"/><path d="M1072 435.6H1075M1072 448.6H1075" stroke="#7aa0c0" stroke-width="0.9"/><rect x="1075" y="443.6" width="12" height="9.4" fill="#fff"/><rect x="1076.2" y="444.6" width="1.4" height="7.8" fill="#2a2a2a"/><rect x="1078.4" y="444.6" width="1" height="7.8" fill="#2a2a2a"/><rect x="1080.2" y="444.6" width="1.6" height="7.8" fill="#2a2a2a"/><rect x="1082.8" y="444.6" width="1" height="7.8" fill="#2a2a2a"/><rect x="1084.6" y="444.6" width="1.4" height="7.8" fill="#2a2a2a"/></svg>
<div class="a" style="left:269px;top:463px;width:1506px;height:379px;background:#fff;border:1px solid #a0a0a0;border-top:1px solid #8c8c8c;"></div>
<div class="a" style="left:270px;top:464px;width:1504px;height:24px;background:#f3f3f3;"></div>
<div class="a" style="left:270px;top:488px;width:1504px;height:1px;background:#e3e3e3;"></div>
<div class="a" style="left:270px;top:464px;width:2px;height:25px;background:#000;"></div>
<div class="a" style="left:335px;top:489px;width:1px;height:332px;background:#e2e2e2;"></div>
<div class="a" style="left:335px;top:465px;width:2px;height:23px;background:#fbfbfb;"></div>
<div class="a" style="left:337px;top:465px;width:1px;height:23px;background:#dcdcdc;"></div>
<div class="a" style="left:610px;top:489px;width:1px;height:332px;background:#e2e2e2;"></div>
<div class="a" style="left:610px;top:465px;width:2px;height:23px;background:#fbfbfb;"></div>
<div class="a" style="left:612px;top:465px;width:1px;height:23px;background:#dcdcdc;"></div>
<div class="a" style="left:628px;top:489px;width:1px;height:332px;background:#e2e2e2;"></div>
<div class="a" style="left:628px;top:465px;width:2px;height:23px;background:#fbfbfb;"></div>
<div class="a" style="left:630px;top:465px;width:1px;height:23px;background:#dcdcdc;"></div>
<div class="a" style="left:722px;top:489px;width:1px;height:332px;background:#e2e2e2;"></div>
<div class="a" style="left:722px;top:465px;width:2px;height:23px;background:#fbfbfb;"></div>
<div class="a" style="left:724px;top:465px;width:1px;height:23px;background:#dcdcdc;"></div>
<div class="a" style="left:786px;top:489px;width:1px;height:332px;background:#e2e2e2;"></div>
<div class="a" style="left:786px;top:465px;width:2px;height:23px;background:#fbfbfb;"></div>
<div class="a" style="left:788px;top:465px;width:1px;height:23px;background:#dcdcdc;"></div>
<div class="a" style="left:877px;top:489px;width:1px;height:332px;background:#e2e2e2;"></div>
<div class="a" style="left:877px;top:465px;width:2px;height:23px;background:#fbfbfb;"></div>
<div class="a" style="left:879px;top:465px;width:1px;height:23px;background:#dcdcdc;"></div>
<div class="a" style="left:978px;top:489px;width:1px;height:332px;background:#e2e2e2;"></div>
<div class="a" style="left:978px;top:465px;width:2px;height:23px;background:#fbfbfb;"></div>
<div class="a" style="left:980px;top:465px;width:1px;height:23px;background:#dcdcdc;"></div>
<div class="a" style="left:1028px;top:489px;width:1px;height:332px;background:#e2e2e2;"></div>
<div class="a" style="left:1028px;top:465px;width:2px;height:23px;background:#fbfbfb;"></div>
<div class="a" style="left:1030px;top:465px;width:1px;height:23px;background:#dcdcdc;"></div>
<div class="a" style="left:1086px;top:489px;width:1px;height:332px;background:#e2e2e2;"></div>
<div class="a" style="left:1086px;top:465px;width:2px;height:23px;background:#fbfbfb;"></div>
<div class="a" style="left:1088px;top:465px;width:1px;height:23px;background:#dcdcdc;"></div>
<div class="a" style="left:1183px;top:489px;width:1px;height:332px;background:#e2e2e2;"></div>
<div class="a" style="left:1183px;top:465px;width:2px;height:23px;background:#fbfbfb;"></div>
<div class="a" style="left:1185px;top:465px;width:1px;height:23px;background:#dcdcdc;"></div>
<div class="a" style="left:1281px;top:489px;width:1px;height:332px;background:#e2e2e2;"></div>
<div class="a" style="left:1281px;top:465px;width:2px;height:23px;background:#fbfbfb;"></div>
<div class="a" style="left:1283px;top:465px;width:1px;height:23px;background:#dcdcdc;"></div>
<div class="a" style="left:1395px;top:489px;width:1px;height:332px;background:#e2e2e2;"></div>
<div class="a" style="left:1395px;top:465px;width:2px;height:23px;background:#fbfbfb;"></div>
<div class="a" style="left:1397px;top:465px;width:1px;height:23px;background:#dcdcdc;"></div>
<div class="a" style="left:1433px;top:489px;width:1px;height:332px;background:#e2e2e2;"></div>
<div class="a" style="left:1433px;top:465px;width:2px;height:23px;background:#fbfbfb;"></div>
<div class="a" style="left:1435px;top:465px;width:1px;height:23px;background:#dcdcdc;"></div>
<div class="a" style="left:1539px;top:489px;width:1px;height:332px;background:#e2e2e2;"></div>
<div class="a" style="left:1539px;top:465px;width:2px;height:23px;background:#fbfbfb;"></div>
<div class="a" style="left:1541px;top:465px;width:1px;height:23px;background:#dcdcdc;"></div>
<div class="a" style="left:1653px;top:489px;width:1px;height:332px;background:#e2e2e2;"></div>
<div class="a" style="left:1653px;top:465px;width:2px;height:23px;background:#fbfbfb;"></div>
<div class="a" style="left:1655px;top:465px;width:1px;height:23px;background:#dcdcdc;"></div>
<div class="a t" style="top:466px;font-size:13.5px;color:#000;left:312px;">Lp</div>
<div class="a t" style="top:466px;font-size:13.5px;color:#000;letter-spacing:0.194px;left:343px;">Nazwa artykułu</div>
<div class="a t" style="top:466px;font-size:13.5px;color:#000;left:614px;">R</div>
<div class="a t" style="top:466px;font-size:13.5px;color:#000;left:637px;">Ilość</div>
<div class="a t" style="top:466px;font-size:13.5px;color:#000;left:730px;">j.m.</div>
<div class="a t" style="top:466px;font-size:13.5px;color:#000;letter-spacing:-0.104px;left:794.5px;">Cena netto</div>
<div class="a t" style="top:466px;font-size:13.5px;color:#000;letter-spacing:-0.049px;left:886px;">Cena brutto</div>
<div class="a t" style="top:466px;font-size:13.5px;color:#000;left:987px;">R/N 1</div>
<div class="a t" style="top:466px;font-size:13.5px;color:#000;left:1037px;">R/N 2</div>
<div class="a t" style="top:466px;font-size:13.5px;color:#000;letter-spacing:-0.002px;left:1094.5px;">C.netto z rab.</div>
<div class="a t" style="top:466px;font-size:13.5px;color:#000;letter-spacing:0.031px;left:1192px;">C.brutto z rab.</div>
<div class="a t" style="top:466px;font-size:13.5px;color:#000;letter-spacing:0.171px;left:1289px;">Wartość netto</div>
<div class="a t" style="top:466px;font-size:13.5px;color:#000;left:1403px;">VAT</div>
<div class="a t" style="top:466px;font-size:13.5px;color:#000;letter-spacing:0.275px;left:1442px;">Kwota VAT</div>
<div class="a t" style="top:466px;font-size:13.5px;color:#000;letter-spacing:0.195px;left:1548px;">Wartość brutto</div>
<div class="a t" style="top:466px;font-size:13.5px;color:#000;letter-spacing:0.055px;left:1661.5px;">Indeks katalogowy</div>
<div class="a" style="left:275px;top:492px;width:20px;height:20px;background:#f7f7f7;border:1px solid #b7b7b7;"></div>
<div class="a t" style="top:493px;font-size:13.5px;color:#000;font-weight:bold;left:-69.5px;width:400px;text-align:right;">1</div>
<div class="a t" style="top:493px;font-size:13.5px;color:#000;letter-spacing:0.129px;left:338px;">Body 4-pak Kwiaty</div>
<div class="a t" style="top:493px;font-size:13.5px;color:#000;left:613px;">T</div>
<div class="a t" style="top:493px;font-size:13.5px;color:#000;left:316.5px;width:400px;text-align:right;">1,0000</div>
<div class="a t" style="top:493px;font-size:13.5px;color:#000;left:726px;">szt.</div>
<div class="a t" style="top:493px;font-size:13.5px;color:#000;left:472px;width:400px;text-align:right;">63,74</div>
<div class="a t" style="top:493px;font-size:13.5px;color:#000;left:573px;width:400px;text-align:right;">78,40</div>
<div class="a t" style="top:493px;font-size:13.5px;color:#000;left:623px;width:400px;text-align:right;">0,00</div>
<div class="a t" style="top:493px;font-size:13.5px;color:#000;left:680.5px;width:400px;text-align:right;">0,00</div>
<div class="a t" style="top:493px;font-size:13.5px;color:#000;left:778px;width:400px;text-align:right;">63,74</div>
<div class="a t" style="top:493px;font-size:13.5px;color:#000;left:875.5px;width:400px;text-align:right;">78,40</div>
<div class="a t" style="top:493px;font-size:13.5px;color:#000;left:989px;width:400px;text-align:right;">63,74</div>
<div class="a t" style="top:493px;font-size:13.5px;color:#000;left:1134px;width:400px;text-align:right;">14,66</div>
<div class="a t" style="top:493px;font-size:13.5px;color:#000;left:1248px;width:400px;text-align:right;">78,40</div>
<div class="a t" style="top:493px;font-size:13.5px;color:#000;left:1398px;">23</div>
<div class="a t" style="top:493px;font-size:13.5px;color:#000;left:1657px;">1J349710-24M</div>
<div class="a" style="left:275px;top:517px;width:20px;height:20px;background:#f7f7f7;border:1px solid #b7b7b7;"></div>
<div class="a t" style="top:518px;font-size:13.5px;color:#000;font-weight:bold;left:-69.5px;width:400px;text-align:right;">2</div>
<div class="a t" style="top:518px;font-size:13.5px;color:#000;letter-spacing:0.090px;left:338px;">Body Lis</div>
<div class="a t" style="top:518px;font-size:13.5px;color:#000;left:613px;">T</div>
<div class="a t" style="top:518px;font-size:13.5px;color:#000;left:316.5px;width:400px;text-align:right;">1,0000</div>
<div class="a t" style="top:518px;font-size:13.5px;color:#000;left:726px;">szt.</div>
<div class="a t" style="top:518px;font-size:13.5px;color:#000;left:472px;width:400px;text-align:right;">31,87</div>
<div class="a t" style="top:518px;font-size:13.5px;color:#000;left:573px;width:400px;text-align:right;">39,20</div>
<div class="a t" style="top:518px;font-size:13.5px;color:#000;left:623px;width:400px;text-align:right;">0,00</div>
<div class="a t" style="top:518px;font-size:13.5px;color:#000;left:680.5px;width:400px;text-align:right;">0,00</div>
<div class="a t" style="top:518px;font-size:13.5px;color:#000;left:778px;width:400px;text-align:right;">31,87</div>
<div class="a t" style="top:518px;font-size:13.5px;color:#000;left:875.5px;width:400px;text-align:right;">39,20</div>
<div class="a t" style="top:518px;font-size:13.5px;color:#000;left:989px;width:400px;text-align:right;">31,87</div>
<div class="a t" style="top:518px;font-size:13.5px;color:#000;left:1134px;width:400px;text-align:right;">7,33</div>
<div class="a t" style="top:518px;font-size:13.5px;color:#000;left:1248px;width:400px;text-align:right;">39,20</div>
<div class="a t" style="top:518px;font-size:13.5px;color:#000;left:1398px;">23</div>
<div class="a t" style="top:518px;font-size:13.5px;color:#000;left:1657px;">1J287710-24M</div>
<div class="a" style="left:275px;top:542px;width:20px;height:20px;background:#f7f7f7;border:1px solid #b7b7b7;"></div>
<div class="a t" style="top:543px;font-size:13.5px;color:#000;font-weight:bold;left:-69.5px;width:400px;text-align:right;">3</div>
<div class="a t" style="top:543px;font-size:13.5px;color:#000;letter-spacing:0.090px;left:338px;">Body Lis</div>
<div class="a t" style="top:543px;font-size:13.5px;color:#000;left:613px;">T</div>
<div class="a t" style="top:543px;font-size:13.5px;color:#000;left:316.5px;width:400px;text-align:right;">1,0000</div>
<div class="a t" style="top:543px;font-size:13.5px;color:#000;left:726px;">szt.</div>
<div class="a t" style="top:543px;font-size:13.5px;color:#000;left:472px;width:400px;text-align:right;">31,87</div>
<div class="a t" style="top:543px;font-size:13.5px;color:#000;left:573px;width:400px;text-align:right;">39,20</div>
<div class="a t" style="top:543px;font-size:13.5px;color:#000;left:623px;width:400px;text-align:right;">0,00</div>
<div class="a t" style="top:543px;font-size:13.5px;color:#000;left:680.5px;width:400px;text-align:right;">0,00</div>
<div class="a t" style="top:543px;font-size:13.5px;color:#000;left:778px;width:400px;text-align:right;">31,87</div>
<div class="a t" style="top:543px;font-size:13.5px;color:#000;left:875.5px;width:400px;text-align:right;">39,20</div>
<div class="a t" style="top:543px;font-size:13.5px;color:#000;left:989px;width:400px;text-align:right;">31,87</div>
<div class="a t" style="top:543px;font-size:13.5px;color:#000;left:1134px;width:400px;text-align:right;">7,33</div>
<div class="a t" style="top:543px;font-size:13.5px;color:#000;left:1248px;width:400px;text-align:right;">39,20</div>
<div class="a t" style="top:543px;font-size:13.5px;color:#000;left:1398px;">23</div>
<div class="a t" style="top:543px;font-size:13.5px;color:#000;left:1657px;">1J257310-24M</div>
<div class="a" style="left:275px;top:567px;width:20px;height:20px;background:#f7f7f7;border:1px solid #b7b7b7;"></div>
<div class="a t" style="top:568px;font-size:13.5px;color:#000;font-weight:bold;left:-69.5px;width:400px;text-align:right;">4</div>
<div class="a t" style="top:568px;font-size:13.5px;color:#000;letter-spacing:0.017px;left:338px;">Body z dlugim rękawem dino</div>
<div class="a t" style="top:568px;font-size:13.5px;color:#000;left:613px;">T</div>
<div class="a t" style="top:568px;font-size:13.5px;color:#000;left:316.5px;width:400px;text-align:right;">2,0000</div>
<div class="a t" style="top:568px;font-size:13.5px;color:#000;left:726px;">szt.</div>
<div class="a t" style="top:568px;font-size:13.5px;color:#000;left:472px;width:400px;text-align:right;">27,32</div>
<div class="a t" style="top:568px;font-size:13.5px;color:#000;left:573px;width:400px;text-align:right;">33,60</div>
<div class="a t" style="top:568px;font-size:13.5px;color:#000;left:623px;width:400px;text-align:right;">0,00</div>
<div class="a t" style="top:568px;font-size:13.5px;color:#000;left:680.5px;width:400px;text-align:right;">0,00</div>
<div class="a t" style="top:568px;font-size:13.5px;color:#000;left:778px;width:400px;text-align:right;">27,32</div>
<div class="a t" style="top:568px;font-size:13.5px;color:#000;left:875.5px;width:400px;text-align:right;">33,60</div>
<div class="a t" style="top:568px;font-size:13.5px;color:#000;left:989px;width:400px;text-align:right;">54,63</div>
<div class="a t" style="top:568px;font-size:13.5px;color:#000;left:1134px;width:400px;text-align:right;">12,57</div>
<div class="a t" style="top:568px;font-size:13.5px;color:#000;left:1248px;width:400px;text-align:right;">67,20</div>
<div class="a t" style="top:568px;font-size:13.5px;color:#000;left:1398px;">23</div>
<div class="a t" style="top:568px;font-size:13.5px;color:#000;left:1657px;">18184710-24M</div>
<div class="a" style="left:302px;top:590px;width:1472px;height:24px;background:#808080;"></div>
<div class="a" style="left:335px;top:590px;width:1px;height:24px;background:#e8e8e8;"></div>
<div class="a" style="left:610px;top:590px;width:1px;height:24px;background:#e8e8e8;"></div>
<div class="a" style="left:628px;top:590px;width:1px;height:24px;background:#e8e8e8;"></div>
<div class="a" style="left:722px;top:590px;width:1px;height:24px;background:#e8e8e8;"></div>
<div class="a" style="left:786px;top:590px;width:1px;height:24px;background:#e8e8e8;"></div>
<div class="a" style="left:877px;top:590px;width:1px;height:24px;background:#e8e8e8;"></div>
<div class="a" style="left:978px;top:590px;width:1px;height:24px;background:#e8e8e8;"></div>
<div class="a" style="left:1028px;top:590px;width:1px;height:24px;background:#e8e8e8;"></div>
<div class="a" style="left:1086px;top:590px;width:1px;height:24px;background:#e8e8e8;"></div>
<div class="a" style="left:1183px;top:590px;width:1px;height:24px;background:#e8e8e8;"></div>
<div class="a" style="left:1281px;top:590px;width:1px;height:24px;background:#e8e8e8;"></div>
<div class="a" style="left:1395px;top:590px;width:1px;height:24px;background:#e8e8e8;"></div>
<div class="a" style="left:1433px;top:590px;width:1px;height:24px;background:#e8e8e8;"></div>
<div class="a" style="left:1539px;top:590px;width:1px;height:24px;background:#e8e8e8;"></div>
<div class="a" style="left:1653px;top:590px;width:1px;height:24px;background:#e8e8e8;"></div>
<div class="a" style="left:275px;top:592px;width:20px;height:20px;background:#f7f7f7;border:1px solid #b7b7b7;"></div>
<div class="a t" style="top:593px;font-size:13.5px;color:#fff;font-weight:bold;left:-69.5px;width:400px;text-align:right;">5</div>
<div class="a t" style="top:593px;font-size:13.5px;color:#fff;letter-spacing:0.158px;left:338px;">Zestaw 3-el Bluza body spodenki</div>
<div class="a t" style="top:593px;font-size:13.5px;color:#fff;left:613px;">T</div>
<div class="a t" style="top:593px;font-size:13.5px;color:#fff;left:316.5px;width:400px;text-align:right;">1,0000</div>
<div class="a t" style="top:593px;font-size:13.5px;color:#fff;left:726px;">szt.</div>
<div class="a t" style="top:593px;font-size:13.5px;color:#fff;left:472px;width:400px;text-align:right;">55,28</div>
<div class="a t" style="top:593px;font-size:13.5px;color:#fff;left:573px;width:400px;text-align:right;">68,00</div>
<div class="a t" style="top:593px;font-size:13.5px;color:#fff;left:623px;width:400px;text-align:right;">0,00</div>
<div class="a t" style="top:593px;font-size:13.5px;color:#fff;left:680.5px;width:400px;text-align:right;">0,00</div>
<div class="a t" style="top:593px;font-size:13.5px;color:#fff;left:778px;width:400px;text-align:right;">55,28</div>
<div class="a t" style="top:593px;font-size:13.5px;color:#fff;left:875.5px;width:400px;text-align:right;">68,00</div>
<div class="a t" style="top:593px;font-size:13.5px;color:#fff;left:989px;width:400px;text-align:right;">55,28</div>
<div class="a t" style="top:593px;font-size:13.5px;color:#fff;left:1134px;width:400px;text-align:right;">12,72</div>
<div class="a t" style="top:593px;font-size:13.5px;color:#fff;left:1248px;width:400px;text-align:right;">68,00</div>
<div class="a t" style="top:593px;font-size:13.5px;color:#fff;left:1398px;">23</div>
<div class="a t" style="top:593px;font-size:13.5px;color:#fff;left:1657px;">1J154010-24M</div>
<div class="a" style="left:270px;top:821px;width:1504px;height:20px;background:#f0f0f0;"></div>
<div class="a" style="left:292px;top:821px;width:21px;height:20px;background:#cdcdcd;"></div>
<svg class="a" style="left:276px;top:825px;" width="10" height="12" viewBox="0 0 10 12" fill="none"><path d="M7.5 1.5L2.5 6L7.5 10.5" stroke="#505050" stroke-width="2"/></svg>
<svg class="a" style="left:1757px;top:825px;" width="10" height="12" viewBox="0 0 10 12" fill="none"><path d="M2.5 1.5L7.5 6L2.5 10.5" stroke="#505050" stroke-width="2"/></svg>
<div class="a t" style="top:843px;font-size:14.5px;color:#a3a3a3;transform:scaleX(0.8789);transform-origin:0 50%;left:268px;">Ins</div>
<div class="a t" style="top:843px;font-size:14.5px;color:#a3a3a3;transform:scaleX(0.8865);transform-origin:0 50%;left:351px;">F2</div>
<div class="a t" style="top:843px;font-size:14.5px;color:#a3a3a3;transform:scaleX(0.8733);transform-origin:0 50%;left:433px;">Del</div>
<div class="a t" style="top:843px;font-size:14.5px;color:#a3a3a3;transform:scaleX(0.9050);transform-origin:0 50%;left:516px;">Ctrl+Shift+O</div>
<div class="a t" style="top:843px;font-size:14.5px;color:#a3a3a3;transform:scaleX(0.8700);transform-origin:0 50%;left:613px;">Ctrl+O</div>
<div class="a btn" style="left:270px;top:862px;width:72.5px;height:26px;"></div>
<div class="a t" style="top:865px;font-size:13.5px;color:#000;left:105.25px;width:400px;text-align:center;">Dodaj</div>
<div class="a btn" style="left:352.5px;top:862px;width:72.5px;height:26px;"></div>
<div class="a t" style="top:865px;font-size:13.5px;color:#000;left:187.75px;width:400px;text-align:center;">Popraw</div>
<div class="a btn" style="left:435px;top:862px;width:72.5px;height:26px;"></div>
<div class="a t" style="top:865px;font-size:13.5px;color:#000;left:270.25px;width:400px;text-align:center;">Usuń</div>
<div class="a btn" style="left:517.5px;top:862px;width:87.5px;height:26px;"></div>
<div class="a t" style="top:865px;font-size:13.5px;color:#000;left:360.25px;width:400px;text-align:center;">Opis/Nr serii</div>
<div class="a btn" style="left:615px;top:862px;width:72.5px;height:26px;"></div>
<div class="a t" style="top:865px;font-size:13.5px;color:#000;left:450.25px;width:400px;text-align:center;">Operacje</div>
<div class="a t" style="top:844px;font-size:15.5px;color:#000;letter-spacing:-0.319px;left:1175.5px;">Razem</div>
<div class="a" style="left:1175px;top:864px;width:598px;height:27px;background:#fff;border:1px solid #b9b9b9;"></div>
<div class="a t" style="top:870px;font-size:15.5px;color:#000;letter-spacing:-0.409px;left:1183px;">Netto</div>
<div class="a t" style="top:870px;font-size:15px;color:#000;font-weight:bold;left:964px;width:400px;text-align:right;">237,40</div>
<div class="a t" style="top:870px;font-size:15.5px;color:#000;letter-spacing:-0.615px;left:1392px;">VAT</div>
<div class="a t" style="top:870px;font-size:15px;color:#000;font-weight:bold;left:1151px;width:400px;text-align:right;">54,60</div>
<div class="a t" style="top:870px;font-size:15.5px;color:#000;letter-spacing:-0.475px;left:1581px;">Brutto</div>
<div class="a t" style="top:870px;font-size:15px;color:#c4203a;font-weight:bold;left:1358px;width:400px;text-align:right;">292,00</div>
<div class="a t" style="top:908px;font-size:14.5px;color:#a3a3a3;transform:scaleX(0.8436);transform-origin:0 50%;left:254px;">Ctrl+R</div>
<div class="a t" style="top:908px;font-size:14.5px;color:#a3a3a3;transform:scaleX(0.8632);transform-origin:0 50%;left:411px;">Ctrl+M</div>
<div class="a t" style="top:908px;font-size:14.5px;color:#a3a3a3;transform:scaleX(0.8556);transform-origin:0 50%;left:583px;">Ctrl+D</div>
<div class="a t" style="top:908px;font-size:14.5px;color:#a3a3a3;transform:scaleX(0.8405);transform-origin:0 50%;left:928px;">Ctrl+P</div>
<div class="a t" style="top:908px;font-size:14.5px;color:#a3a3a3;transform:scaleX(0.8927);transform-origin:0 50%;left:1056px;">Shift+Ctrl+D</div>
<div class="a t" style="top:908px;font-size:14.5px;color:#a3a3a3;transform:scaleX(0.8806);transform-origin:0 50%;left:1632px;">F10</div>
<div class="a t" style="top:908px;font-size:14.5px;color:#a3a3a3;transform:scaleX(0.9101);transform-origin:0 50%;left:1714.5px;">Esc</div>
<div class="a btn" style="left:255px;top:927px;width:148px;height:26px;"></div>
<div class="a t" style="top:930px;font-size:13.5px;color:#000;letter-spacing:0.037px;left:128.0px;width:400px;text-align:center;">Realizacja zamówień</div>
<div class="a btn" style="left:412px;top:927px;width:163px;height:26px;"></div>
<div class="a t" style="top:930px;font-size:13.5px;color:#000;letter-spacing:0.022px;left:292.5px;width:400px;text-align:center;">Dokumenty magazynowe</div>
<div class="a btn" style="left:585px;top:927px;width:65px;height:26px;background:#f0f0f0;border-color:#c8c8c8;"></div>
<div class="a t" style="top:930px;font-size:13.5px;color:#a8a8a8;left:416.5px;width:400px;text-align:center;">Drukuj</div>
<div class="a btn" style="left:930px;top:927px;width:118px;height:26px;"></div>
<div class="a t" style="top:930px;font-size:13.5px;color:#000;letter-spacing:-0.019px;left:788.0px;width:400px;text-align:center;">Pola dodatkowe</div>
<div class="a btn" style="left:1057px;top:927px;width:111px;height:26px;"></div>
<div class="a t" style="top:930px;font-size:13.5px;color:#000;letter-spacing:0.420px;left:911.5px;width:400px;text-align:center;">Adres dostawy</div>
<div class="a btn" style="left:1634px;top:927px;width:72px;height:26px;"></div>
<div class="a t" style="top:930px;font-size:13.5px;color:#000;left:1469.0px;width:400px;text-align:center;">Zapisz</div>
<div class="a btn" style="left:1716px;top:927px;width:72px;height:26px;"></div>
<div class="a t" style="top:930px;font-size:13.5px;color:#000;left:1551.0px;width:400px;text-align:center;">Anuluj</div>
<div class="a" style="left:775px;top:932px;width:16px;height:16px;background:#fff;border:1px solid #8c8c8c;"></div>
<div class="a t" style="top:930px;font-size:13.5px;color:#000;left:794.5px;">Grupuj pozycje</div>
<div class="a" style="left:660px;top:927px;width:28px;height:26px;background:#bfe2fa;border:1.4px solid #4284b8;"></div>
<svg class="a" style="left:660px;top:927px" width="28" height="26" viewBox="660 927 28 26" fill="none"><rect x="669" y="931.2" width="11.6" height="6" fill="#f08373" stroke="#6a3f3f" stroke-width="1"/><path d="M665.4 946.0V937.4H684.6V940.4" stroke="#3a4a4a" stroke-width="1.1" fill="none"/><path d="M665.4 946.0H667.4" stroke="#3a4a4a" stroke-width="1.1"/><rect x="667" y="938.6" width="16.6" height="12" fill="#f4fbff" opacity="0.9"/></svg>
<div class="a t" style="top:937px;font-size:12px;color:#000;letter-spacing:0.633px;left:668.2px;">FV</div>
<div class="a" style="left:697.6px;top:927px;width:28px;height:26px;background:#dedede;border:1.4px solid #9c9c9c;"></div>
<svg class="a" style="left:697.6px;top:927px" width="28" height="26" viewBox="697.6 927 28 26" fill="none"><rect x="706.0" y="929.8" width="11.6" height="6.6" fill="#fff" stroke="#444" stroke-width="1"/><path d="M703.0 944.8000000000001V936.2H722.2V939.2" stroke="#3a4a4a" stroke-width="1.1" fill="none"/><path d="M703.0 944.8000000000001H705.0" stroke="#3a4a4a" stroke-width="1.1"/><rect x="704.6" y="937.4000000000001" width="16.6" height="12" fill="#f4fbff" opacity="0.9"/></svg>
<div class="a t" style="top:937px;font-size:12px;color:#000;letter-spacing:0.296px;left:705.8000000000001px;">KP</div>
<div class="a" style="left:735px;top:927px;width:28px;height:26px;background:#bfe2fa;border:1.4px solid #4284b8;"></div>
<svg class="a" style="left:735px;top:927px" width="28" height="26" viewBox="735 927 28 26" fill="none"><rect x="744" y="931.2" width="11.6" height="6" fill="#f08373" stroke="#6a3f3f" stroke-width="1"/><path d="M740.4 946.0V937.4H759.6V940.4" stroke="#3a4a4a" stroke-width="1.1" fill="none"/><path d="M740.4 946.0H742.4" stroke="#3a4a4a" stroke-width="1.1"/><rect x="742" y="938.6" width="16.6" height="12" fill="#f4fbff" opacity="0.9"/></svg>
<div class="a t" style="top:937px;font-size:12px;color:#000;letter-spacing:-1.028px;left:743.2px;">WZ</div>
<div class="a" style="left:0px;top:1004px;width:1920px;height:28px;background:#fff;"></div>
<div class="a" style="left:0px;top:1004px;width:1920px;height:1px;background:#c9c9c9;"></div>
<div class="a" style="left:0px;top:1005px;width:1px;height:27px;background:#c9c9c9;"></div>
<div class="a" style="left:1918px;top:1005px;width:1px;height:27px;background:#c9c9c9;"></div>
<div class="a" style="left:274px;top:1006px;width:1px;height:26px;background:#d9d9d9;"></div>
<div class="a" style="left:548px;top:1006px;width:1px;height:26px;background:#d9d9d9;"></div>
<div class="a" style="left:821px;top:1006px;width:1px;height:26px;background:#d9d9d9;"></div>
<div class="a" style="left:1096px;top:1006px;width:1px;height:26px;background:#d9d9d9;"></div>
<div class="a" style="left:1369px;top:1006px;width:1px;height:26px;background:#d9d9d9;"></div>
<div class="a" style="left:1642px;top:1006px;width:1px;height:26px;background:#d9d9d9;"></div>
<div class="a t" style="top:1010px;font-size:15.5px;color:#1a1a1a;transform:scaleX(0.9422);transform-origin:0 50%;left:6.5px;">Użytkownik: krzysiek/krzysiek</div>
<div class="a t" style="top:1010px;font-size:15.5px;color:#1a1a1a;transform:scaleX(0.8790);transform-origin:0 50%;left:280.5px;">Firma: SKIPWISH</div>
<div class="a t" style="top:1010px;font-size:15.5px;color:#1a1a1a;transform:scaleX(0.9589);transform-origin:0 50%;left:554px;">Magazyn: Allegro</div>
<div class="a t" style="top:1010px;font-size:15.5px;color:#1a1a1a;transform:scaleX(0.9080);transform-origin:0 50%;left:828px;">pełny zakres</div>
<div class="a t" style="top:1010px;font-size:15.5px;color:#1a1a1a;left:1102px;">.</div>
<div class="a t" style="top:1010px;font-size:15.5px;color:#1a1a1a;transform:scaleX(0.8968);transform-origin:0 50%;left:1375px;">Kasa: Kasa główna</div>
<div class="a t" style="top:1010px;font-size:15.5px;color:#1a1a1a;transform:scaleX(0.8627);transform-origin:0 50%;left:1649px;">BD: SKIPWISH, Serwer: SKIPWISH</div>
<div class="a" style="left:0px;top:1032px;width:1920px;height:48px;background:#63c6ea;"></div>
<div class="a" style="left:0px;top:1032px;width:1920px;height:1px;background:#3fa6cf;"></div>
<div class="a" style="left:0px;top:1079px;width:1920px;height:1px;background:#1f7f93;"></div>
<svg class="a" style="left:13px;top:1039px;" width="34" height="34" viewBox="0 0 34 34" fill="none"><path d="M1 5.2L14.3 3.3V16.2H1ZM15.8 3.1L33 0.6V16.2H15.8ZM1 17.7H14.3V30.6L1 28.7ZM15.8 17.7H33V33.3L15.8 30.8Z" fill="#fff"/></svg>
<svg class="a" style="left:76px;top:1037px;" width="42" height="40" viewBox="0 0 42 40" fill="none"><rect x="2" y="1.5" width="17" height="33" fill="#1e86d6" stroke="#7fc4f2" stroke-width="1"/><rect x="3" y="2.5" width="15" height="8" fill="#2f9be6"/><path d="M3 11.5H18M3 14H18" stroke="#8fd0f7" stroke-width="1"/><rect x="9.5" y="24.5" width="31" height="14" rx="1.5" fill="#7e8a99" stroke="#e6eef5" stroke-width="1.2"/><path d="M19 24V20.5H30V24" stroke="#e6eef5" stroke-width="1.3" fill="#7e8a99"/><path d="M12 31.5H38" stroke="#e6eef5" stroke-width="1.2"/><circle cx="17" cy="31.5" r="1.8" fill="#7e8a99" stroke="#e6eef5"/><circle cx="33" cy="31.5" r="1.8" fill="#7e8a99" stroke="#e6eef5"/></svg>
<svg class="a" style="left:152px;top:1040px;" width="40" height="30" viewBox="0 0 40 30" fill="none"><defs><linearGradient id="psg" x1="0" y1="0" x2="1" y2="1"><stop offset="0" stop-color="#3f8fd8"/><stop offset="1" stop-color="#1a5fae"/></linearGradient></defs><path d="M9 2H37.5Q39.5 2 39 4L33 26Q32.5 28 30.5 28H2.5Q0.5 28 1 26L7 4Q7.5 2 9 2Z" fill="url(#psg)" stroke="#9cccf0" stroke-width="1"/><path d="M11 7L22 14.5L9 23" stroke="#fff" stroke-width="3" stroke-linecap="round" stroke-linejoin="round" fill="none"/><path d="M20 23.5H29" stroke="#fff" stroke-width="2.6" stroke-linecap="round"/></svg>
<svg class="a" style="left:225px;top:1037px;" width="42" height="38" viewBox="0 0 42 38" fill="none"><path d="M2 6Q2 4 4 4H14L17 7H36Q38 7 38 9V13H2Z" fill="#e9c25a"/><rect x="5" y="5" width="4" height="3" fill="#7fb24a"/><rect x="13" y="6" width="4" height="3" fill="#d9534f"/><rect x="25" y="8" width="4" height="3" fill="#7fb24a"/><rect x="1.5" y="11" width="38" height="24" rx="1.5" fill="#f7dc85" stroke="#e3b94a" stroke-width="1"/><path d="M7 20H34V35H7Z" fill="#58a9e0"/><path d="M7 20H34V24H7Z" fill="#8cc8f0"/><rect x="15" y="28" width="11" height="5" fill="#f2cf5c"/><path d="M4 35H37" stroke="#5a9fd6" stroke-width="2"/></svg>
<div class="a" style="left:300px;top:1036px;width:38px;height:36px;border-radius:6px;background:#b30f0b;border:1px solid #d24a40;"></div>
<svg class="a" style="left:305px;top:1040px;" width="28" height="28" viewBox="0 0 28 28" fill="none"><path d="M3.5 24C2 22.5 6 19 11 17.5C13.5 13 15 8 14.2 4.6C13.7 2.4 11.2 2.6 11.5 5.4C12 10 17 17 22 18.2C25.5 19 26.5 16.8 23.5 16.4C19 15.8 9 18.5 5.8 23.5C4.8 25 4 24.6 3.5 24Z" stroke="#fff" stroke-width="1.8" stroke-linejoin="round"/></svg>
<div class="a" style="left:357px;top:1033px;width:72px;height:45px;background:#a5dbf3;"></div>
<div class="a" style="left:357px;top:1033px;width:1px;height:45px;background:#5bb0d4;"></div>
<div class="a" style="left:428px;top:1033px;width:1px;height:45px;background:#5bb0d4;"></div>
<div class="a" style="left:373px;top:1036px;width:40px;height:40px;border-radius:2px 12px 2px 12px;background:linear-gradient(135deg,#ef4a40 0%,#e5352f 50%,#d7231f 100%);"></div>
<div class="a" style="left:373px;top:1036px;width:20px;height:20px;background:rgba(255,255,255,0.08);"></div>
<div class="a" style="left:393px;top:1056px;width:20px;height:20px;background:rgba(0,0,0,0.06);"></div>
<div class="a t" style="top:1051px;font-size:14px;color:#fff;font-weight:bold;letter-spacing:0.000px;left:389px;">mg</div>
<svg class="a" style="left:1720px;top:1044px;" width="26" height="24" viewBox="0 0 26 24" fill="none"><path d="M3.6 2.2V21.4" stroke="#fff" stroke-width="1.7"/><path d="M5.4 3.6C8.6 2.2 10.6 2.6 12.4 3.8C14.2 5 15.6 4.8 16.4 4.4V7.6C18.4 8.8 20.4 8.4 21.8 7.8C21.4 10.6 19.6 13 16.4 13.2C14 13.4 12.6 12 10.8 11.4C8.8 10.8 7 11.4 5.4 12.4Z" fill="#f4f8fb" stroke="#fff" stroke-width="1.2" stroke-linejoin="round"/><path d="M16.4 7.8V12.8C18.8 12.6 20.6 11 21.4 8.4C19.6 9 18 8.8 16.4 7.8Z" fill="#c9d5dd"/></svg>
<svg class="a" style="left:1750px;top:1044px;" width="26" height="24" viewBox="0 0 26 24" fill="none"><rect x="3" y="3" width="4.8" height="6.2" fill="#eaf6fc" stroke="#fff" stroke-width="1.4"/><rect x="4.4" y="4.6" width="2" height="2.6" fill="#5b8aa8"/><path d="M5.4 9.4V18.4H8" stroke="#fff" stroke-width="1.5"/><rect x="8" y="5.6" width="13.4" height="10" fill="#63c6ea" stroke="#fff" stroke-width="1.6"/><path d="M14.6 15.8V19M10.4 19.6H19" stroke="#fff" stroke-width="1.7"/></svg>
<svg class="a" style="left:1780px;top:1043px;" width="26" height="26" viewBox="0 0 26 26" fill="none"><path d="M3 9.6H5.6L11 3.6V22.4L5.6 16.4H3Z" fill="#fff" stroke="#fff" stroke-width="1" stroke-linejoin="round"/><path d="M6.4 10.2L10 6.2V19.8L6.4 15.8Z" fill="#b9c7d1"/><circle cx="15.4" cy="17.6" r="5" fill="#e02b2b" stroke="#f4c9c9" stroke-width="0.6"/><path d="M13.2 15.4L17.6 19.8M17.6 15.4L13.2 19.8" stroke="#fff" stroke-width="1.5"/></svg>
<div class="a t" style="top:1037px;font-size:14.5px;color:#111;letter-spacing:-0.156px;left:1661.5px;width:400px;text-align:center;">20:49</div>
<div class="a t" style="top:1058px;font-size:14.5px;color:#111;letter-spacing:0.084px;left:1661.5px;width:400px;text-align:center;">2021-02-07</div>
</body></html>
